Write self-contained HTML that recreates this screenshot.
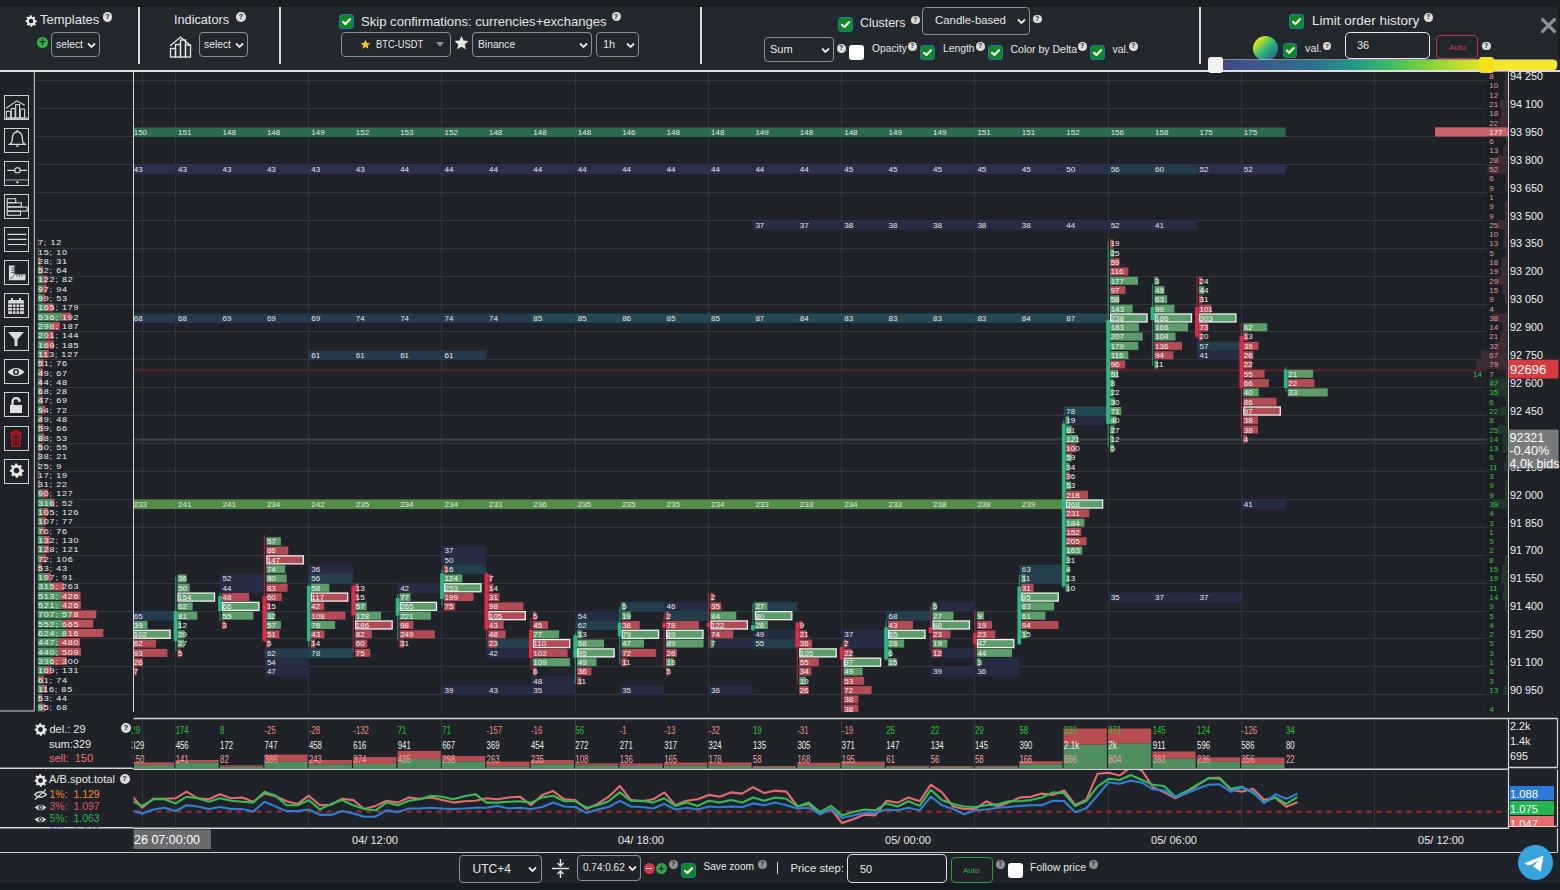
<!DOCTYPE html>
<html><head><meta charset="utf-8"><style>
html,body{margin:0;padding:0;}
body{width:1560px;height:890px;overflow:hidden;position:relative;background:#1f2329;font-family:"Liberation Sans",sans-serif;}
.t{position:absolute;white-space:pre;line-height:1.15;}
.q{position:absolute;border-radius:50%;background:#dcdcdc;color:#23272e;text-align:center;font-weight:bold;}
.cb{position:absolute;background:#0b8a1f;border:1px solid #2a6fb0;border-radius:3px;}
.cb svg{position:absolute;left:0;top:0;}
.cbw{position:absolute;background:#ffffff;border-radius:3px;}
.sel{position:absolute;border:1px solid #8b8e92;border-radius:4px;color:#e6e8ea;background:transparent;}
.inp{position:absolute;border:1px solid #ddd;border-radius:5px;color:#e6e8ea;background:transparent;box-sizing:border-box;}
.sep{position:absolute;top:7px;width:2px;height:57px;background:#dcdcdc;}
.ib{position:absolute;left:4px;width:23px;height:23px;border:1px solid #cfcfcf;}
</style></head><body>
<div style="position:absolute;left:0;top:0;width:1560px;height:7px;background:#1a1d22"></div>
<div style="position:absolute;left:0;top:7px;width:1560px;height:63px;background:#23272e"></div>
<div style="position:absolute;left:0;top:70px;width:1560px;height:2px;background:#dedede"></div>

<div style="position:absolute;left:0;top:883px;width:1560px;height:7px;background:#131a21"></div>
<svg style="position:absolute;left:0;top:0" width="1560" height="890" font-family="Liberation Sans, sans-serif">
<clipPath id="cc"><rect x="133.5" y="72" width="1375.0" height="640"/></clipPath>
<clipPath id="vp"><rect x="35" y="72" width="98.5" height="640"/></clipPath>
<line x1="35.00" y1="80.50" x2="1508.50" y2="80.50" stroke="#33373d" stroke-width="1" />
<line x1="35.00" y1="108.50" x2="1508.50" y2="108.50" stroke="#33373d" stroke-width="1" />
<line x1="35.00" y1="136.50" x2="1508.50" y2="136.50" stroke="#33373d" stroke-width="1" />
<line x1="35.00" y1="164.50" x2="1508.50" y2="164.50" stroke="#33373d" stroke-width="1" />
<line x1="35.00" y1="192.50" x2="1508.50" y2="192.50" stroke="#33373d" stroke-width="1" />
<line x1="35.00" y1="220.50" x2="1508.50" y2="220.50" stroke="#33373d" stroke-width="1" />
<line x1="35.00" y1="248.50" x2="1508.50" y2="248.50" stroke="#33373d" stroke-width="1" />
<line x1="35.00" y1="276.50" x2="1508.50" y2="276.50" stroke="#33373d" stroke-width="1" />
<line x1="35.00" y1="304.50" x2="1508.50" y2="304.50" stroke="#33373d" stroke-width="1" />
<line x1="35.00" y1="331.50" x2="1508.50" y2="331.50" stroke="#33373d" stroke-width="1" />
<line x1="35.00" y1="359.50" x2="1508.50" y2="359.50" stroke="#33373d" stroke-width="1" />
<line x1="35.00" y1="387.50" x2="1508.50" y2="387.50" stroke="#33373d" stroke-width="1" />
<line x1="35.00" y1="415.50" x2="1508.50" y2="415.50" stroke="#33373d" stroke-width="1" />
<line x1="35.00" y1="443.50" x2="1508.50" y2="443.50" stroke="#33373d" stroke-width="1" />
<line x1="35.00" y1="471.50" x2="1508.50" y2="471.50" stroke="#33373d" stroke-width="1" />
<line x1="35.00" y1="499.50" x2="1508.50" y2="499.50" stroke="#33373d" stroke-width="1" />
<line x1="35.00" y1="527.50" x2="1508.50" y2="527.50" stroke="#33373d" stroke-width="1" />
<line x1="35.00" y1="555.50" x2="1508.50" y2="555.50" stroke="#33373d" stroke-width="1" />
<line x1="35.00" y1="583.50" x2="1508.50" y2="583.50" stroke="#33373d" stroke-width="1" />
<line x1="35.00" y1="611.50" x2="1508.50" y2="611.50" stroke="#33373d" stroke-width="1" />
<line x1="35.00" y1="638.50" x2="1508.50" y2="638.50" stroke="#33373d" stroke-width="1" />
<line x1="35.00" y1="666.50" x2="1508.50" y2="666.50" stroke="#33373d" stroke-width="1" />
<line x1="35.00" y1="694.50" x2="1508.50" y2="694.50" stroke="#33373d" stroke-width="1" />
<line x1="142.50" y1="72.00" x2="142.50" y2="712.00" stroke="#33373d" stroke-width="1" />
<line x1="175.50" y1="72.00" x2="175.50" y2="712.00" stroke="#33373d" stroke-width="1" />
<line x1="308.50" y1="72.00" x2="308.50" y2="712.00" stroke="#33373d" stroke-width="1" />
<line x1="441.50" y1="72.00" x2="441.50" y2="712.00" stroke="#33373d" stroke-width="1" />
<line x1="575.50" y1="72.00" x2="575.50" y2="712.00" stroke="#33373d" stroke-width="1" />
<line x1="708.50" y1="72.00" x2="708.50" y2="712.00" stroke="#33373d" stroke-width="1" />
<line x1="841.50" y1="72.00" x2="841.50" y2="712.00" stroke="#33373d" stroke-width="1" />
<line x1="974.50" y1="72.00" x2="974.50" y2="712.00" stroke="#33373d" stroke-width="1" />
<line x1="1108.50" y1="72.00" x2="1108.50" y2="712.00" stroke="#33373d" stroke-width="1" />
<line x1="1241.50" y1="72.00" x2="1241.50" y2="712.00" stroke="#33373d" stroke-width="1" />
<line x1="1374.50" y1="72.00" x2="1374.50" y2="712.00" stroke="#33373d" stroke-width="1" />
<g clip-path="url(#cc)">
<rect x="133.50" y="127.42" width="1152.18" height="9.50" fill="#2b6a4a" />
<text x="133.70" y="134.82" font-size="8" fill="#e6e8ea" text-anchor="start" >150</text>
<text x="178.11" y="134.82" font-size="8" fill="#e6e8ea" text-anchor="start" >151</text>
<text x="222.51" y="134.82" font-size="8" fill="#e6e8ea" text-anchor="start" >148</text>
<text x="266.92" y="134.82" font-size="8" fill="#e6e8ea" text-anchor="start" >148</text>
<text x="311.33" y="134.82" font-size="8" fill="#e6e8ea" text-anchor="start" >149</text>
<text x="355.74" y="134.82" font-size="8" fill="#e6e8ea" text-anchor="start" >152</text>
<text x="400.14" y="134.82" font-size="8" fill="#e6e8ea" text-anchor="start" >153</text>
<text x="444.55" y="134.82" font-size="8" fill="#e6e8ea" text-anchor="start" >152</text>
<text x="488.96" y="134.82" font-size="8" fill="#e6e8ea" text-anchor="start" >148</text>
<text x="533.36" y="134.82" font-size="8" fill="#e6e8ea" text-anchor="start" >148</text>
<text x="577.77" y="134.82" font-size="8" fill="#e6e8ea" text-anchor="start" >148</text>
<text x="622.18" y="134.82" font-size="8" fill="#e6e8ea" text-anchor="start" >146</text>
<text x="666.58" y="134.82" font-size="8" fill="#e6e8ea" text-anchor="start" >148</text>
<text x="710.99" y="134.82" font-size="8" fill="#e6e8ea" text-anchor="start" >148</text>
<text x="755.40" y="134.82" font-size="8" fill="#e6e8ea" text-anchor="start" >149</text>
<text x="799.80" y="134.82" font-size="8" fill="#e6e8ea" text-anchor="start" >148</text>
<text x="844.21" y="134.82" font-size="8" fill="#e6e8ea" text-anchor="start" >148</text>
<text x="888.62" y="134.82" font-size="8" fill="#e6e8ea" text-anchor="start" >149</text>
<text x="933.03" y="134.82" font-size="8" fill="#e6e8ea" text-anchor="start" >149</text>
<text x="977.43" y="134.82" font-size="8" fill="#e6e8ea" text-anchor="start" >151</text>
<text x="1021.84" y="134.82" font-size="8" fill="#e6e8ea" text-anchor="start" >151</text>
<text x="1066.25" y="134.82" font-size="8" fill="#e6e8ea" text-anchor="start" >152</text>
<text x="1110.65" y="134.82" font-size="8" fill="#e6e8ea" text-anchor="start" >156</text>
<text x="1155.06" y="134.82" font-size="8" fill="#e6e8ea" text-anchor="start" >158</text>
<text x="1199.47" y="134.82" font-size="8" fill="#e6e8ea" text-anchor="start" >175</text>
<text x="1243.87" y="134.82" font-size="8" fill="#e6e8ea" text-anchor="start" >175</text>
<rect x="133.50" y="164.63" width="930.15" height="9.50" fill="#2a2f4d" />
<text x="133.70" y="172.03" font-size="8" fill="#e6e8ea" text-anchor="start" >43</text>
<text x="178.11" y="172.03" font-size="8" fill="#e6e8ea" text-anchor="start" >43</text>
<text x="222.51" y="172.03" font-size="8" fill="#e6e8ea" text-anchor="start" >43</text>
<text x="266.92" y="172.03" font-size="8" fill="#e6e8ea" text-anchor="start" >43</text>
<text x="311.33" y="172.03" font-size="8" fill="#e6e8ea" text-anchor="start" >43</text>
<text x="355.74" y="172.03" font-size="8" fill="#e6e8ea" text-anchor="start" >43</text>
<text x="400.14" y="172.03" font-size="8" fill="#e6e8ea" text-anchor="start" >44</text>
<text x="444.55" y="172.03" font-size="8" fill="#e6e8ea" text-anchor="start" >44</text>
<text x="488.96" y="172.03" font-size="8" fill="#e6e8ea" text-anchor="start" >44</text>
<text x="533.36" y="172.03" font-size="8" fill="#e6e8ea" text-anchor="start" >44</text>
<text x="577.77" y="172.03" font-size="8" fill="#e6e8ea" text-anchor="start" >44</text>
<text x="622.18" y="172.03" font-size="8" fill="#e6e8ea" text-anchor="start" >44</text>
<text x="666.58" y="172.03" font-size="8" fill="#e6e8ea" text-anchor="start" >44</text>
<text x="710.99" y="172.03" font-size="8" fill="#e6e8ea" text-anchor="start" >44</text>
<text x="755.40" y="172.03" font-size="8" fill="#e6e8ea" text-anchor="start" >44</text>
<text x="799.80" y="172.03" font-size="8" fill="#e6e8ea" text-anchor="start" >44</text>
<text x="844.21" y="172.03" font-size="8" fill="#e6e8ea" text-anchor="start" >45</text>
<text x="888.62" y="172.03" font-size="8" fill="#e6e8ea" text-anchor="start" >45</text>
<text x="933.03" y="172.03" font-size="8" fill="#e6e8ea" text-anchor="start" >45</text>
<text x="977.43" y="172.03" font-size="8" fill="#e6e8ea" text-anchor="start" >45</text>
<text x="1021.84" y="172.03" font-size="8" fill="#e6e8ea" text-anchor="start" >45</text>
<rect x="1063.65" y="164.63" width="44.41" height="9.50" fill="#2a2f4d" />
<text x="1066.25" y="172.03" font-size="8" fill="#e6e8ea" text-anchor="start" >50</text>
<rect x="1108.05" y="164.63" width="88.81" height="9.50" fill="#253d4b" />
<text x="1110.65" y="172.03" font-size="8" fill="#e6e8ea" text-anchor="start" >56</text>
<text x="1155.06" y="172.03" font-size="8" fill="#e6e8ea" text-anchor="start" >60</text>
<rect x="1196.87" y="164.63" width="88.81" height="9.50" fill="#2a2f4d" />
<text x="1199.47" y="172.03" font-size="8" fill="#e6e8ea" text-anchor="start" >52</text>
<text x="1243.87" y="172.03" font-size="8" fill="#e6e8ea" text-anchor="start" >52</text>
<rect x="752.80" y="220.45" width="444.07" height="9.50" fill="#282d44" />
<text x="755.40" y="227.85" font-size="8" fill="#e6e8ea" text-anchor="start" >37</text>
<text x="799.80" y="227.85" font-size="8" fill="#e6e8ea" text-anchor="start" >37</text>
<text x="844.21" y="227.85" font-size="8" fill="#e6e8ea" text-anchor="start" >38</text>
<text x="888.62" y="227.85" font-size="8" fill="#e6e8ea" text-anchor="start" >38</text>
<text x="933.03" y="227.85" font-size="8" fill="#e6e8ea" text-anchor="start" >38</text>
<text x="977.43" y="227.85" font-size="8" fill="#e6e8ea" text-anchor="start" >38</text>
<text x="1021.84" y="227.85" font-size="8" fill="#e6e8ea" text-anchor="start" >38</text>
<text x="1066.25" y="227.85" font-size="8" fill="#e6e8ea" text-anchor="start" >44</text>
<text x="1110.65" y="227.85" font-size="8" fill="#e6e8ea" text-anchor="start" >52</text>
<text x="1155.06" y="227.85" font-size="8" fill="#e6e8ea" text-anchor="start" >41</text>
<rect x="133.50" y="313.48" width="397.26" height="9.50" fill="#27394d" />
<text x="133.70" y="320.88" font-size="8" fill="#e6e8ea" text-anchor="start" >68</text>
<text x="178.11" y="320.88" font-size="8" fill="#e6e8ea" text-anchor="start" >68</text>
<text x="222.51" y="320.88" font-size="8" fill="#e6e8ea" text-anchor="start" >69</text>
<text x="266.92" y="320.88" font-size="8" fill="#e6e8ea" text-anchor="start" >69</text>
<text x="311.33" y="320.88" font-size="8" fill="#e6e8ea" text-anchor="start" >69</text>
<text x="355.74" y="320.88" font-size="8" fill="#e6e8ea" text-anchor="start" >74</text>
<text x="400.14" y="320.88" font-size="8" fill="#e6e8ea" text-anchor="start" >74</text>
<text x="444.55" y="320.88" font-size="8" fill="#e6e8ea" text-anchor="start" >74</text>
<text x="488.96" y="320.88" font-size="8" fill="#e6e8ea" text-anchor="start" >74</text>
<rect x="530.76" y="313.48" width="577.29" height="9.50" fill="#234a52" />
<text x="533.36" y="320.88" font-size="8" fill="#e6e8ea" text-anchor="start" >85</text>
<text x="577.77" y="320.88" font-size="8" fill="#e6e8ea" text-anchor="start" >85</text>
<text x="622.18" y="320.88" font-size="8" fill="#e6e8ea" text-anchor="start" >86</text>
<text x="666.58" y="320.88" font-size="8" fill="#e6e8ea" text-anchor="start" >85</text>
<text x="710.99" y="320.88" font-size="8" fill="#e6e8ea" text-anchor="start" >85</text>
<text x="755.40" y="320.88" font-size="8" fill="#e6e8ea" text-anchor="start" >87</text>
<text x="799.80" y="320.88" font-size="8" fill="#e6e8ea" text-anchor="start" >84</text>
<text x="844.21" y="320.88" font-size="8" fill="#e6e8ea" text-anchor="start" >83</text>
<text x="888.62" y="320.88" font-size="8" fill="#e6e8ea" text-anchor="start" >83</text>
<text x="933.03" y="320.88" font-size="8" fill="#e6e8ea" text-anchor="start" >83</text>
<text x="977.43" y="320.88" font-size="8" fill="#e6e8ea" text-anchor="start" >83</text>
<text x="1021.84" y="320.88" font-size="8" fill="#e6e8ea" text-anchor="start" >84</text>
<text x="1066.25" y="320.88" font-size="8" fill="#e6e8ea" text-anchor="start" >87</text>
<rect x="308.73" y="350.69" width="177.63" height="9.50" fill="#27394d" />
<text x="311.33" y="358.09" font-size="8" fill="#e6e8ea" text-anchor="start" >61</text>
<text x="355.74" y="358.09" font-size="8" fill="#e6e8ea" text-anchor="start" >61</text>
<text x="400.14" y="358.09" font-size="8" fill="#e6e8ea" text-anchor="start" >61</text>
<text x="444.55" y="358.09" font-size="8" fill="#e6e8ea" text-anchor="start" >61</text>
<rect x="133.50" y="499.54" width="930.15" height="9.50" fill="#528e46" />
<text x="133.70" y="506.94" font-size="8" fill="#e6e8ea" text-anchor="start" >233</text>
<text x="178.11" y="506.94" font-size="8" fill="#e6e8ea" text-anchor="start" >241</text>
<text x="222.51" y="506.94" font-size="8" fill="#e6e8ea" text-anchor="start" >241</text>
<text x="266.92" y="506.94" font-size="8" fill="#e6e8ea" text-anchor="start" >234</text>
<text x="311.33" y="506.94" font-size="8" fill="#e6e8ea" text-anchor="start" >242</text>
<text x="355.74" y="506.94" font-size="8" fill="#e6e8ea" text-anchor="start" >235</text>
<text x="400.14" y="506.94" font-size="8" fill="#e6e8ea" text-anchor="start" >234</text>
<text x="444.55" y="506.94" font-size="8" fill="#e6e8ea" text-anchor="start" >234</text>
<text x="488.96" y="506.94" font-size="8" fill="#e6e8ea" text-anchor="start" >233</text>
<text x="533.36" y="506.94" font-size="8" fill="#e6e8ea" text-anchor="start" >236</text>
<text x="577.77" y="506.94" font-size="8" fill="#e6e8ea" text-anchor="start" >235</text>
<text x="622.18" y="506.94" font-size="8" fill="#e6e8ea" text-anchor="start" >235</text>
<text x="666.58" y="506.94" font-size="8" fill="#e6e8ea" text-anchor="start" >235</text>
<text x="710.99" y="506.94" font-size="8" fill="#e6e8ea" text-anchor="start" >234</text>
<text x="755.40" y="506.94" font-size="8" fill="#e6e8ea" text-anchor="start" >233</text>
<text x="799.80" y="506.94" font-size="8" fill="#e6e8ea" text-anchor="start" >233</text>
<text x="844.21" y="506.94" font-size="8" fill="#e6e8ea" text-anchor="start" >234</text>
<text x="888.62" y="506.94" font-size="8" fill="#e6e8ea" text-anchor="start" >233</text>
<text x="933.03" y="506.94" font-size="8" fill="#e6e8ea" text-anchor="start" >238</text>
<text x="977.43" y="506.94" font-size="8" fill="#e6e8ea" text-anchor="start" >238</text>
<text x="1021.84" y="506.94" font-size="8" fill="#e6e8ea" text-anchor="start" >239</text>
<rect x="1241.27" y="499.54" width="44.41" height="9.50" fill="#272c45" />
<text x="1243.87" y="506.94" font-size="8" fill="#e6e8ea" text-anchor="start" >41</text>
<rect x="1108.05" y="592.57" width="133.22" height="9.50" fill="#272c45" />
<text x="1110.65" y="599.97" font-size="8" fill="#e6e8ea" text-anchor="start" >35</text>
<text x="1155.06" y="599.97" font-size="8" fill="#e6e8ea" text-anchor="start" >37</text>
<text x="1199.47" y="599.97" font-size="8" fill="#e6e8ea" text-anchor="start" >37</text>
<rect x="133.50" y="611.17" width="42.01" height="9.50" fill="#263a50" />
<text x="133.70" y="618.57" font-size="8" fill="#e6e8ea" text-anchor="start" >65</text>
<rect x="219.91" y="573.96" width="44.41" height="9.50" fill="#272c45" />
<text x="222.51" y="581.36" font-size="8" fill="#e6e8ea" text-anchor="start" >52</text>
<rect x="219.91" y="583.26" width="44.41" height="9.50" fill="#272c45" />
<text x="222.51" y="590.66" font-size="8" fill="#e6e8ea" text-anchor="start" >44</text>
<rect x="264.32" y="648.39" width="44.41" height="9.50" fill="#263a50" />
<text x="266.92" y="655.79" font-size="8" fill="#e6e8ea" text-anchor="start" >62</text>
<rect x="264.32" y="657.69" width="44.41" height="9.50" fill="#272c45" />
<text x="266.92" y="665.09" font-size="8" fill="#e6e8ea" text-anchor="start" >54</text>
<rect x="264.32" y="666.99" width="44.41" height="9.50" fill="#272c45" />
<text x="266.92" y="674.39" font-size="8" fill="#e6e8ea" text-anchor="start" >47</text>
<rect x="308.73" y="564.66" width="44.41" height="9.50" fill="#272c45" />
<text x="311.33" y="572.06" font-size="8" fill="#e6e8ea" text-anchor="start" >36</text>
<rect x="308.73" y="573.96" width="44.41" height="9.50" fill="#233f4b" />
<text x="311.33" y="581.36" font-size="8" fill="#e6e8ea" text-anchor="start" >56</text>
<rect x="308.73" y="648.39" width="44.41" height="9.50" fill="#234a52" />
<text x="311.33" y="655.79" font-size="8" fill="#e6e8ea" text-anchor="start" >78</text>
<rect x="397.54" y="583.26" width="44.41" height="9.50" fill="#272c45" />
<text x="400.14" y="590.66" font-size="8" fill="#e6e8ea" text-anchor="start" >42</text>
<rect x="441.95" y="546.05" width="44.41" height="9.50" fill="#272c45" />
<text x="444.55" y="553.45" font-size="8" fill="#e6e8ea" text-anchor="start" >37</text>
<rect x="441.95" y="555.36" width="44.41" height="9.50" fill="#272c45" />
<text x="444.55" y="562.76" font-size="8" fill="#e6e8ea" text-anchor="start" >50</text>
<rect x="441.95" y="564.66" width="44.41" height="9.50" fill="#233f4b" />
<rect x="441.95" y="685.60" width="133.22" height="9.50" fill="#272c45" />
<text x="444.55" y="693.00" font-size="8" fill="#e6e8ea" text-anchor="start" >39</text>
<text x="488.96" y="693.00" font-size="8" fill="#e6e8ea" text-anchor="start" >43</text>
<text x="533.36" y="693.00" font-size="8" fill="#e6e8ea" text-anchor="start" >35</text>
<rect x="486.36" y="639.08" width="44.41" height="9.50" fill="#233f4b" />
<rect x="486.36" y="648.39" width="44.41" height="9.50" fill="#272c45" />
<text x="488.96" y="655.79" font-size="8" fill="#e6e8ea" text-anchor="start" >42</text>
<rect x="530.76" y="676.30" width="44.41" height="9.50" fill="#272c45" />
<text x="533.36" y="683.70" font-size="8" fill="#e6e8ea" text-anchor="start" >48</text>
<rect x="575.17" y="611.17" width="44.41" height="9.50" fill="#272c45" />
<text x="577.77" y="618.57" font-size="8" fill="#e6e8ea" text-anchor="start" >54</text>
<rect x="575.17" y="620.48" width="44.41" height="9.50" fill="#233f4b" />
<text x="577.77" y="627.88" font-size="8" fill="#e6e8ea" text-anchor="start" >62</text>
<rect x="619.58" y="601.87" width="44.41" height="9.50" fill="#233f4b" />
<rect x="619.58" y="685.60" width="44.41" height="9.50" fill="#272c45" />
<text x="622.18" y="693.00" font-size="8" fill="#e6e8ea" text-anchor="start" >35</text>
<rect x="663.98" y="601.87" width="44.41" height="9.50" fill="#272c45" />
<text x="666.58" y="609.27" font-size="8" fill="#e6e8ea" text-anchor="start" >46</text>
<rect x="663.98" y="611.17" width="44.41" height="9.50" fill="#233f4b" />
<rect x="708.39" y="639.08" width="44.41" height="9.50" fill="#272c45" />
<rect x="708.39" y="685.60" width="44.41" height="9.50" fill="#272c45" />
<text x="710.99" y="693.00" font-size="8" fill="#e6e8ea" text-anchor="start" >36</text>
<rect x="752.80" y="601.87" width="44.41" height="9.50" fill="#233f4b" />
<rect x="752.80" y="629.78" width="44.41" height="9.50" fill="#272c45" />
<text x="755.40" y="637.18" font-size="8" fill="#e6e8ea" text-anchor="start" >49</text>
<rect x="752.80" y="639.08" width="44.41" height="9.50" fill="#233f4b" />
<text x="755.40" y="646.48" font-size="8" fill="#e6e8ea" text-anchor="start" >55</text>
<rect x="841.61" y="629.78" width="44.41" height="9.50" fill="#272c45" />
<text x="844.21" y="637.18" font-size="8" fill="#e6e8ea" text-anchor="start" >37</text>
<rect x="841.61" y="639.08" width="44.41" height="9.50" fill="#272c45" />
<rect x="886.02" y="611.17" width="44.41" height="9.50" fill="#233f4b" />
<text x="888.62" y="618.57" font-size="8" fill="#e6e8ea" text-anchor="start" >68</text>
<rect x="930.43" y="601.87" width="44.41" height="9.50" fill="#272c45" />
<rect x="930.43" y="648.39" width="44.41" height="9.50" fill="#272c45" />
<rect x="930.43" y="666.99" width="44.41" height="9.50" fill="#272c45" />
<text x="933.03" y="674.39" font-size="8" fill="#e6e8ea" text-anchor="start" >39</text>
<rect x="974.83" y="657.69" width="44.41" height="9.50" fill="#272c45" />
<rect x="974.83" y="666.99" width="44.41" height="9.50" fill="#272c45" />
<text x="977.43" y="674.39" font-size="8" fill="#e6e8ea" text-anchor="start" >36</text>
<rect x="1019.24" y="564.66" width="44.41" height="9.50" fill="#233f4b" />
<text x="1021.84" y="572.06" font-size="8" fill="#e6e8ea" text-anchor="start" >63</text>
<rect x="1019.24" y="573.96" width="44.41" height="9.50" fill="#233f4b" />
<rect x="1063.65" y="406.51" width="44.41" height="9.50" fill="#234a52" />
<text x="1066.25" y="413.91" font-size="8" fill="#e6e8ea" text-anchor="start" >78</text>
<rect x="1063.65" y="415.81" width="44.41" height="9.50" fill="#272c45" />
<rect x="1196.87" y="341.39" width="44.41" height="9.50" fill="#233f4b" />
<text x="1199.47" y="348.79" font-size="8" fill="#e6e8ea" text-anchor="start" >57</text>
<rect x="1196.87" y="350.69" width="44.41" height="9.50" fill="#272c45" />
<text x="1199.47" y="358.09" font-size="8" fill="#e6e8ea" text-anchor="start" >41</text>
<line x1="133.50" y1="370.30" x2="1508.50" y2="370.30" stroke="#4c242b" stroke-width="3" />
<line x1="133.50" y1="439.60" x2="1508.50" y2="439.60" stroke="#3c4147" stroke-width="2" />
<rect x="133.10" y="620.98" width="14.38" height="8.00" fill="#5d9d6c" />
<rect x="133.70" y="630.28" width="36.40" height="8.00" fill="#5d9d6c" stroke="#f2f2f2" stroke-width="1.3"/>
<rect x="133.10" y="639.58" width="22.85" height="8.00" fill="#b34b56" />
<rect x="133.10" y="648.89" width="34.28" height="8.00" fill="#b34b56" />
<rect x="133.10" y="658.19" width="9.58" height="8.00" fill="#b34b56" />
<rect x="133.10" y="667.49" width="3.50" height="8.00" fill="#b34b56" />
<text x="133.70" y="627.88" font-size="8" fill="#f4f4f4" text-anchor="start" >39</text>
<text x="133.70" y="637.18" font-size="8" fill="#f4f4f4" text-anchor="start" >102</text>
<text x="133.70" y="646.48" font-size="8" fill="#f4f4f4" text-anchor="start" >62</text>
<text x="133.70" y="655.79" font-size="8" fill="#f4f4f4" text-anchor="start" >93</text>
<text x="133.70" y="665.09" font-size="8" fill="#f4f4f4" text-anchor="start" >26</text>
<text x="133.70" y="674.39" font-size="8" fill="#f4f4f4" text-anchor="start" >7</text>
<rect x="177.51" y="574.46" width="8.79" height="8.00" fill="#5d9d6c" />
<rect x="177.51" y="583.76" width="12.21" height="8.00" fill="#5d9d6c" />
<rect x="178.11" y="593.07" width="36.40" height="8.00" fill="#5d9d6c" stroke="#f2f2f2" stroke-width="1.3"/>
<rect x="177.51" y="602.37" width="15.14" height="8.00" fill="#5d9d6c" />
<rect x="177.51" y="611.67" width="19.78" height="8.00" fill="#5d9d6c" />
<rect x="177.51" y="620.98" width="3.50" height="8.00" fill="#5d9d6c" />
<rect x="177.51" y="630.28" width="7.08" height="8.00" fill="#5d9d6c" />
<rect x="177.51" y="639.58" width="6.59" height="8.00" fill="#5d9d6c" />
<rect x="177.51" y="648.89" width="3.50" height="8.00" fill="#b34b56" />
<rect x="175.01" y="576.60" width="1.30" height="74.10" fill="#2fb884" opacity="0.6"/>
<rect x="173.71" y="611.00" width="3.70" height="30.00" fill="#2fb884" />
<text x="178.11" y="581.36" font-size="8" fill="#f4f4f4" text-anchor="start" >36</text>
<text x="178.11" y="590.66" font-size="8" fill="#f4f4f4" text-anchor="start" >50</text>
<text x="178.11" y="599.97" font-size="8" fill="#f4f4f4" text-anchor="start" >154</text>
<text x="178.11" y="609.27" font-size="8" fill="#f4f4f4" text-anchor="start" >62</text>
<text x="178.11" y="618.57" font-size="8" fill="#f4f4f4" text-anchor="start" >81</text>
<text x="178.11" y="627.88" font-size="8" fill="#f4f4f4" text-anchor="start" >12</text>
<text x="178.11" y="637.18" font-size="8" fill="#f4f4f4" text-anchor="start" >29</text>
<text x="178.11" y="646.48" font-size="8" fill="#f4f4f4" text-anchor="start" >27</text>
<text x="178.11" y="655.79" font-size="8" fill="#f4f4f4" text-anchor="start" >5</text>
<rect x="221.91" y="593.07" width="27.35" height="8.00" fill="#b34b56" />
<rect x="222.51" y="602.37" width="36.40" height="8.00" fill="#5d9d6c" stroke="#f2f2f2" stroke-width="1.3"/>
<rect x="221.91" y="611.67" width="31.33" height="8.00" fill="#5d9d6c" />
<rect x="221.91" y="620.98" width="3.50" height="8.00" fill="#b34b56" />
<rect x="219.41" y="592.60" width="1.30" height="28.40" fill="#2fb884" opacity="0.6"/>
<rect x="218.11" y="596.00" width="3.70" height="15.00" fill="#2fb884" />
<text x="222.51" y="599.97" font-size="8" fill="#f4f4f4" text-anchor="start" >48</text>
<text x="222.51" y="609.27" font-size="8" fill="#f4f4f4" text-anchor="start" >66</text>
<text x="222.51" y="618.57" font-size="8" fill="#f4f4f4" text-anchor="start" >55</text>
<text x="222.51" y="627.88" font-size="8" fill="#f4f4f4" text-anchor="start" >3</text>
<rect x="266.32" y="537.25" width="14.58" height="8.00" fill="#5d9d6c" />
<rect x="266.32" y="546.55" width="22.00" height="8.00" fill="#b34b56" />
<rect x="266.92" y="555.86" width="36.40" height="8.00" fill="#b34b56" stroke="#f2f2f2" stroke-width="1.3"/>
<rect x="266.32" y="565.16" width="18.93" height="8.00" fill="#5d9d6c" />
<rect x="266.32" y="574.46" width="20.46" height="8.00" fill="#5d9d6c" />
<rect x="266.32" y="583.76" width="21.23" height="8.00" fill="#b34b56" />
<rect x="266.32" y="593.07" width="15.35" height="8.00" fill="#b34b56" />
<rect x="266.32" y="602.37" width="3.84" height="8.00" fill="#b34b56" />
<rect x="266.32" y="611.67" width="8.19" height="8.00" fill="#5d9d6c" />
<rect x="266.32" y="620.98" width="14.58" height="8.00" fill="#5d9d6c" />
<rect x="266.32" y="630.28" width="13.04" height="8.00" fill="#b34b56" />
<rect x="266.32" y="639.58" width="3.50" height="8.00" fill="#b34b56" />
<rect x="263.82" y="535.00" width="1.30" height="107.00" fill="#e02a49" opacity="0.6"/>
<rect x="262.52" y="596.00" width="3.70" height="45.00" fill="#e02a49" />
<text x="266.92" y="544.15" font-size="8" fill="#f4f4f4" text-anchor="start" >57</text>
<text x="266.92" y="553.45" font-size="8" fill="#f4f4f4" text-anchor="start" >86</text>
<text x="266.92" y="562.76" font-size="8" fill="#f4f4f4" text-anchor="start" >147</text>
<text x="266.92" y="572.06" font-size="8" fill="#f4f4f4" text-anchor="start" >74</text>
<text x="266.92" y="581.36" font-size="8" fill="#f4f4f4" text-anchor="start" >80</text>
<text x="266.92" y="590.66" font-size="8" fill="#f4f4f4" text-anchor="start" >83</text>
<text x="266.92" y="599.97" font-size="8" fill="#f4f4f4" text-anchor="start" >60</text>
<text x="266.92" y="609.27" font-size="8" fill="#f4f4f4" text-anchor="start" >15</text>
<text x="266.92" y="618.57" font-size="8" fill="#f4f4f4" text-anchor="start" >32</text>
<text x="266.92" y="627.88" font-size="8" fill="#f4f4f4" text-anchor="start" >57</text>
<text x="266.92" y="637.18" font-size="8" fill="#f4f4f4" text-anchor="start" >51</text>
<text x="266.92" y="646.48" font-size="8" fill="#f4f4f4" text-anchor="start" >5</text>
<rect x="310.73" y="583.76" width="18.64" height="8.00" fill="#5d9d6c" />
<rect x="311.33" y="593.07" width="36.40" height="8.00" fill="#b34b56" stroke="#f2f2f2" stroke-width="1.3"/>
<rect x="310.73" y="602.37" width="13.50" height="8.00" fill="#b34b56" />
<rect x="310.73" y="611.67" width="34.71" height="8.00" fill="#b34b56" />
<rect x="310.73" y="620.98" width="24.42" height="8.00" fill="#5d9d6c" />
<rect x="310.73" y="630.28" width="13.82" height="8.00" fill="#b34b56" />
<rect x="310.73" y="639.58" width="4.50" height="8.00" fill="#b34b56" />
<rect x="308.23" y="584.00" width="1.30" height="63.00" fill="#2fb884" opacity="0.6"/>
<rect x="306.93" y="586.00" width="3.70" height="55.00" fill="#2fb884" />
<text x="311.33" y="590.66" font-size="8" fill="#f4f4f4" text-anchor="start" >58</text>
<text x="311.33" y="599.97" font-size="8" fill="#f4f4f4" text-anchor="start" >117</text>
<text x="311.33" y="609.27" font-size="8" fill="#f4f4f4" text-anchor="start" >42</text>
<text x="311.33" y="618.57" font-size="8" fill="#f4f4f4" text-anchor="start" >108</text>
<text x="311.33" y="627.88" font-size="8" fill="#f4f4f4" text-anchor="start" >76</text>
<text x="311.33" y="637.18" font-size="8" fill="#f4f4f4" text-anchor="start" >43</text>
<text x="311.33" y="646.48" font-size="8" fill="#f4f4f4" text-anchor="start" >14</text>
<rect x="355.13" y="583.76" width="3.50" height="8.00" fill="#b34b56" />
<rect x="355.13" y="593.07" width="3.50" height="8.00" fill="#b34b56" />
<rect x="355.13" y="602.37" width="11.52" height="8.00" fill="#5d9d6c" />
<rect x="355.13" y="611.67" width="25.88" height="8.00" fill="#5d9d6c" />
<rect x="355.74" y="620.98" width="36.40" height="8.00" fill="#b34b56" stroke="#f2f2f2" stroke-width="1.3"/>
<rect x="355.13" y="630.28" width="16.58" height="8.00" fill="#b34b56" />
<rect x="355.13" y="639.58" width="12.13" height="8.00" fill="#b34b56" />
<rect x="355.13" y="648.89" width="15.16" height="8.00" fill="#b34b56" />
<rect x="352.63" y="584.00" width="1.30" height="69.00" fill="#e02a49" opacity="0.6"/>
<rect x="351.33" y="586.00" width="3.70" height="29.60" fill="#e02a49" />
<text x="355.74" y="590.66" font-size="8" fill="#f4f4f4" text-anchor="start" >13</text>
<text x="355.74" y="599.97" font-size="8" fill="#f4f4f4" text-anchor="start" >15</text>
<text x="355.74" y="609.27" font-size="8" fill="#f4f4f4" text-anchor="start" >57</text>
<text x="355.74" y="618.57" font-size="8" fill="#f4f4f4" text-anchor="start" >128</text>
<text x="355.74" y="627.88" font-size="8" fill="#f4f4f4" text-anchor="start" >186</text>
<text x="355.74" y="637.18" font-size="8" fill="#f4f4f4" text-anchor="start" >82</text>
<text x="355.74" y="646.48" font-size="8" fill="#f4f4f4" text-anchor="start" >60</text>
<text x="355.74" y="655.79" font-size="8" fill="#f4f4f4" text-anchor="start" >75</text>
<rect x="399.54" y="593.07" width="10.93" height="8.00" fill="#5d9d6c" />
<rect x="400.14" y="602.37" width="36.40" height="8.00" fill="#5d9d6c" stroke="#f2f2f2" stroke-width="1.3"/>
<rect x="399.54" y="611.67" width="31.36" height="8.00" fill="#5d9d6c" />
<rect x="399.54" y="620.98" width="13.90" height="8.00" fill="#b34b56" />
<rect x="399.54" y="630.28" width="35.33" height="8.00" fill="#b34b56" />
<rect x="399.54" y="639.58" width="4.40" height="8.00" fill="#b34b56" />
<rect x="397.04" y="594.00" width="1.30" height="47.00" fill="#2fb884" opacity="0.6"/>
<rect x="395.74" y="598.00" width="3.70" height="17.60" fill="#2fb884" />
<text x="400.14" y="599.97" font-size="8" fill="#f4f4f4" text-anchor="start" >77</text>
<text x="400.14" y="609.27" font-size="8" fill="#f4f4f4" text-anchor="start" >265</text>
<text x="400.14" y="618.57" font-size="8" fill="#f4f4f4" text-anchor="start" >221</text>
<text x="400.14" y="627.88" font-size="8" fill="#f4f4f4" text-anchor="start" >98</text>
<text x="400.14" y="637.18" font-size="8" fill="#f4f4f4" text-anchor="start" >249</text>
<text x="400.14" y="646.48" font-size="8" fill="#f4f4f4" text-anchor="start" >31</text>
<rect x="443.95" y="565.16" width="3.50" height="8.00" fill="#b34b56" />
<rect x="443.95" y="574.46" width="18.43" height="8.00" fill="#5d9d6c" />
<rect x="444.55" y="583.76" width="36.40" height="8.00" fill="#5d9d6c" stroke="#f2f2f2" stroke-width="1.3"/>
<rect x="443.95" y="593.07" width="29.57" height="8.00" fill="#b34b56" />
<rect x="443.95" y="602.37" width="11.15" height="8.00" fill="#b34b56" />
<rect x="441.45" y="569.70" width="1.30" height="37.00" fill="#2fb884" opacity="0.6"/>
<rect x="440.15" y="573.60" width="3.70" height="25.20" fill="#2fb884" />
<text x="444.55" y="572.06" font-size="8" fill="#f4f4f4" text-anchor="start" >16</text>
<text x="444.55" y="581.36" font-size="8" fill="#f4f4f4" text-anchor="start" >124</text>
<text x="444.55" y="590.66" font-size="8" fill="#f4f4f4" text-anchor="start" >253</text>
<text x="444.55" y="599.97" font-size="8" fill="#f4f4f4" text-anchor="start" >199</text>
<text x="444.55" y="609.27" font-size="8" fill="#f4f4f4" text-anchor="start" >75</text>
<rect x="488.36" y="574.46" width="3.50" height="8.00" fill="#b34b56" />
<rect x="488.36" y="583.76" width="5.01" height="8.00" fill="#b34b56" />
<rect x="488.36" y="593.07" width="11.10" height="8.00" fill="#b34b56" />
<rect x="488.36" y="602.37" width="35.09" height="8.00" fill="#b34b56" />
<rect x="488.96" y="611.67" width="36.40" height="8.00" fill="#b34b56" stroke="#f2f2f2" stroke-width="1.3"/>
<rect x="488.36" y="620.98" width="15.40" height="8.00" fill="#b34b56" />
<rect x="488.36" y="630.28" width="17.19" height="8.00" fill="#b34b56" />
<rect x="488.36" y="639.58" width="8.24" height="8.00" fill="#b34b56" />
<rect x="485.86" y="571.60" width="1.30" height="69.20" fill="#e02a49" opacity="0.6"/>
<rect x="484.56" y="573.60" width="3.70" height="56.10" fill="#e02a49" />
<text x="488.96" y="581.36" font-size="8" fill="#f4f4f4" text-anchor="start" >7</text>
<text x="488.96" y="590.66" font-size="8" fill="#f4f4f4" text-anchor="start" >14</text>
<text x="488.96" y="599.97" font-size="8" fill="#f4f4f4" text-anchor="start" >31</text>
<text x="488.96" y="609.27" font-size="8" fill="#f4f4f4" text-anchor="start" >98</text>
<text x="488.96" y="618.57" font-size="8" fill="#f4f4f4" text-anchor="start" >105</text>
<text x="488.96" y="627.88" font-size="8" fill="#f4f4f4" text-anchor="start" >43</text>
<text x="488.96" y="637.18" font-size="8" fill="#f4f4f4" text-anchor="start" >48</text>
<text x="488.96" y="646.48" font-size="8" fill="#f4f4f4" text-anchor="start" >23</text>
<rect x="532.76" y="611.67" width="3.50" height="8.00" fill="#b34b56" />
<rect x="532.76" y="620.98" width="15.38" height="8.00" fill="#b34b56" />
<rect x="532.76" y="630.28" width="26.32" height="8.00" fill="#5d9d6c" />
<rect x="533.36" y="639.58" width="36.40" height="8.00" fill="#b34b56" stroke="#f2f2f2" stroke-width="1.3"/>
<rect x="532.76" y="648.89" width="34.87" height="8.00" fill="#b34b56" />
<rect x="532.76" y="658.19" width="37.26" height="8.00" fill="#5d9d6c" />
<rect x="532.76" y="667.49" width="3.50" height="8.00" fill="#b34b56" />
<rect x="530.26" y="618.00" width="1.30" height="52.00" fill="#e02a49" opacity="0.6"/>
<rect x="528.96" y="629.70" width="3.70" height="28.30" fill="#e02a49" />
<text x="533.36" y="618.57" font-size="8" fill="#f4f4f4" text-anchor="start" >5</text>
<text x="533.36" y="627.88" font-size="8" fill="#f4f4f4" text-anchor="start" >45</text>
<text x="533.36" y="637.18" font-size="8" fill="#f4f4f4" text-anchor="start" >77</text>
<text x="533.36" y="646.48" font-size="8" fill="#f4f4f4" text-anchor="start" >110</text>
<text x="533.36" y="655.79" font-size="8" fill="#f4f4f4" text-anchor="start" >102</text>
<text x="533.36" y="665.09" font-size="8" fill="#f4f4f4" text-anchor="start" >109</text>
<text x="533.36" y="674.39" font-size="8" fill="#f4f4f4" text-anchor="start" >6</text>
<rect x="577.17" y="630.28" width="5.15" height="8.00" fill="#5d9d6c" />
<rect x="577.17" y="639.58" width="26.91" height="8.00" fill="#5d9d6c" />
<rect x="577.77" y="648.89" width="36.40" height="8.00" fill="#5d9d6c" stroke="#f2f2f2" stroke-width="1.3"/>
<rect x="577.17" y="658.19" width="19.39" height="8.00" fill="#5d9d6c" />
<rect x="577.17" y="667.49" width="14.25" height="8.00" fill="#b34b56" />
<rect x="577.17" y="676.80" width="4.35" height="8.00" fill="#b34b56" />
<rect x="574.67" y="633.00" width="1.30" height="51.00" fill="#2fb884" opacity="0.6"/>
<rect x="573.37" y="635.40" width="3.70" height="22.20" fill="#2fb884" />
<text x="577.77" y="637.18" font-size="8" fill="#f4f4f4" text-anchor="start" >13</text>
<text x="577.77" y="646.48" font-size="8" fill="#f4f4f4" text-anchor="start" >68</text>
<text x="577.77" y="655.79" font-size="8" fill="#f4f4f4" text-anchor="start" >95</text>
<text x="577.77" y="665.09" font-size="8" fill="#f4f4f4" text-anchor="start" >49</text>
<text x="577.77" y="674.39" font-size="8" fill="#f4f4f4" text-anchor="start" >36</text>
<text x="577.77" y="683.70" font-size="8" fill="#f4f4f4" text-anchor="start" >11</text>
<rect x="621.58" y="602.37" width="3.50" height="8.00" fill="#5d9d6c" />
<rect x="621.58" y="611.67" width="9.04" height="8.00" fill="#5d9d6c" />
<rect x="621.58" y="620.98" width="18.09" height="8.00" fill="#b34b56" />
<rect x="622.18" y="630.28" width="36.40" height="8.00" fill="#5d9d6c" stroke="#f2f2f2" stroke-width="1.3"/>
<rect x="621.58" y="639.58" width="22.37" height="8.00" fill="#5d9d6c" />
<rect x="621.58" y="648.89" width="34.27" height="8.00" fill="#b34b56" />
<rect x="621.58" y="658.19" width="5.24" height="8.00" fill="#b34b56" />
<rect x="619.08" y="606.70" width="1.30" height="57.60" fill="#2fb884" opacity="0.6"/>
<rect x="617.78" y="622.80" width="3.70" height="13.60" fill="#2fb884" />
<text x="622.18" y="609.27" font-size="8" fill="#f4f4f4" text-anchor="start" >5</text>
<text x="622.18" y="618.57" font-size="8" fill="#f4f4f4" text-anchor="start" >19</text>
<text x="622.18" y="627.88" font-size="8" fill="#f4f4f4" text-anchor="start" >38</text>
<text x="622.18" y="637.18" font-size="8" fill="#f4f4f4" text-anchor="start" >79</text>
<text x="622.18" y="646.48" font-size="8" fill="#f4f4f4" text-anchor="start" >47</text>
<text x="622.18" y="655.79" font-size="8" fill="#f4f4f4" text-anchor="start" >72</text>
<text x="622.18" y="665.09" font-size="8" fill="#f4f4f4" text-anchor="start" >11</text>
<rect x="665.98" y="611.67" width="3.50" height="8.00" fill="#b34b56" />
<rect x="665.98" y="620.98" width="32.95" height="8.00" fill="#b34b56" />
<rect x="666.58" y="630.28" width="36.40" height="8.00" fill="#5d9d6c" stroke="#f2f2f2" stroke-width="1.3"/>
<rect x="665.98" y="639.58" width="37.60" height="8.00" fill="#5d9d6c" />
<rect x="665.98" y="648.89" width="10.98" height="8.00" fill="#b34b56" />
<rect x="665.98" y="658.19" width="7.60" height="8.00" fill="#5d9d6c" />
<rect x="665.98" y="667.49" width="3.50" height="8.00" fill="#b34b56" />
<rect x="663.48" y="613.70" width="1.30" height="54.30" fill="#e02a49" opacity="0.6"/>
<rect x="662.18" y="622.80" width="3.70" height="4.90" fill="#e02a49" />
<text x="666.58" y="618.57" font-size="8" fill="#f4f4f4" text-anchor="start" >2</text>
<text x="666.58" y="627.88" font-size="8" fill="#f4f4f4" text-anchor="start" >78</text>
<text x="666.58" y="637.18" font-size="8" fill="#f4f4f4" text-anchor="start" >89</text>
<text x="666.58" y="646.48" font-size="8" fill="#f4f4f4" text-anchor="start" >89</text>
<text x="666.58" y="655.79" font-size="8" fill="#f4f4f4" text-anchor="start" >26</text>
<text x="666.58" y="665.09" font-size="8" fill="#f4f4f4" text-anchor="start" >18</text>
<text x="666.58" y="674.39" font-size="8" fill="#f4f4f4" text-anchor="start" >5</text>
<rect x="710.39" y="593.07" width="3.50" height="8.00" fill="#b34b56" />
<rect x="710.39" y="602.37" width="10.79" height="8.00" fill="#b34b56" />
<rect x="710.39" y="611.67" width="25.89" height="8.00" fill="#5d9d6c" />
<rect x="710.99" y="620.98" width="36.40" height="8.00" fill="#b34b56" stroke="#f2f2f2" stroke-width="1.3"/>
<rect x="710.39" y="630.28" width="22.81" height="8.00" fill="#b34b56" />
<rect x="710.39" y="639.58" width="3.50" height="8.00" fill="#5d9d6c" />
<rect x="707.89" y="592.70" width="1.30" height="55.30" fill="#e02a49" opacity="0.6"/>
<rect x="706.59" y="622.80" width="3.70" height="4.50" fill="#e02a49" />
<text x="710.99" y="599.97" font-size="8" fill="#f4f4f4" text-anchor="start" >2</text>
<text x="710.99" y="609.27" font-size="8" fill="#f4f4f4" text-anchor="start" >35</text>
<text x="710.99" y="618.57" font-size="8" fill="#f4f4f4" text-anchor="start" >84</text>
<text x="710.99" y="627.88" font-size="8" fill="#f4f4f4" text-anchor="start" >122</text>
<text x="710.99" y="637.18" font-size="8" fill="#f4f4f4" text-anchor="start" >74</text>
<text x="710.99" y="646.48" font-size="8" fill="#f4f4f4" text-anchor="start" >7</text>
<rect x="754.80" y="602.37" width="12.69" height="8.00" fill="#5d9d6c" />
<rect x="755.40" y="611.67" width="36.40" height="8.00" fill="#5d9d6c" stroke="#f2f2f2" stroke-width="1.3"/>
<rect x="754.80" y="620.98" width="13.16" height="8.00" fill="#5d9d6c" />
<rect x="752.30" y="604.00" width="1.30" height="27.00" fill="#2fb884" opacity="0.6"/>
<rect x="751.00" y="625.30" width="3.70" height="4.90" fill="#2fb884" />
<text x="755.40" y="609.27" font-size="8" fill="#f4f4f4" text-anchor="start" >27</text>
<text x="755.40" y="618.57" font-size="8" fill="#f4f4f4" text-anchor="start" >80</text>
<text x="755.40" y="627.88" font-size="8" fill="#f4f4f4" text-anchor="start" >28</text>
<rect x="799.20" y="620.98" width="3.50" height="8.00" fill="#b34b56" />
<rect x="799.20" y="630.28" width="7.52" height="8.00" fill="#b34b56" />
<rect x="799.20" y="639.58" width="12.89" height="8.00" fill="#b34b56" />
<rect x="799.80" y="648.89" width="36.40" height="8.00" fill="#5d9d6c" stroke="#f2f2f2" stroke-width="1.3"/>
<rect x="799.20" y="658.19" width="19.70" height="8.00" fill="#b34b56" />
<rect x="799.20" y="667.49" width="12.18" height="8.00" fill="#b34b56" />
<rect x="799.20" y="676.80" width="6.80" height="8.00" fill="#5d9d6c" />
<rect x="799.20" y="686.10" width="9.31" height="8.00" fill="#b34b56" />
<rect x="796.70" y="621.00" width="1.30" height="64.00" fill="#e02a49" opacity="0.6"/>
<rect x="795.40" y="622.80" width="3.70" height="24.20" fill="#e02a49" />
<text x="799.80" y="627.88" font-size="8" fill="#f4f4f4" text-anchor="start" >9</text>
<text x="799.80" y="637.18" font-size="8" fill="#f4f4f4" text-anchor="start" >21</text>
<text x="799.80" y="646.48" font-size="8" fill="#f4f4f4" text-anchor="start" >36</text>
<text x="799.80" y="655.79" font-size="8" fill="#f4f4f4" text-anchor="start" >105</text>
<text x="799.80" y="665.09" font-size="8" fill="#f4f4f4" text-anchor="start" >55</text>
<text x="799.80" y="674.39" font-size="8" fill="#f4f4f4" text-anchor="start" >34</text>
<text x="799.80" y="683.70" font-size="8" fill="#f4f4f4" text-anchor="start" >19</text>
<text x="799.80" y="693.00" font-size="8" fill="#f4f4f4" text-anchor="start" >26</text>
<rect x="843.61" y="639.58" width="3.50" height="8.00" fill="#b34b56" />
<rect x="843.61" y="648.89" width="8.53" height="8.00" fill="#b34b56" />
<rect x="844.21" y="658.19" width="36.40" height="8.00" fill="#5d9d6c" stroke="#f2f2f2" stroke-width="1.3"/>
<rect x="843.61" y="667.49" width="18.99" height="8.00" fill="#5d9d6c" />
<rect x="843.61" y="676.80" width="20.54" height="8.00" fill="#b34b56" />
<rect x="843.61" y="686.10" width="27.91" height="8.00" fill="#b34b56" />
<rect x="843.61" y="695.40" width="14.73" height="8.00" fill="#b34b56" />
<rect x="843.61" y="704.70" width="14.73" height="8.00" fill="#b34b56" />
<rect x="841.11" y="644.60" width="1.30" height="66.40" fill="#e02a49" opacity="0.6"/>
<rect x="839.81" y="647.00" width="3.70" height="12.40" fill="#e02a49" />
<text x="844.21" y="646.48" font-size="8" fill="#f4f4f4" text-anchor="start" >2</text>
<text x="844.21" y="655.79" font-size="8" fill="#f4f4f4" text-anchor="start" >22</text>
<text x="844.21" y="665.09" font-size="8" fill="#f4f4f4" text-anchor="start" >97</text>
<text x="844.21" y="674.39" font-size="8" fill="#f4f4f4" text-anchor="start" >49</text>
<text x="844.21" y="683.70" font-size="8" fill="#f4f4f4" text-anchor="start" >53</text>
<text x="844.21" y="693.00" font-size="8" fill="#f4f4f4" text-anchor="start" >72</text>
<text x="844.21" y="702.30" font-size="8" fill="#f4f4f4" text-anchor="start" >38</text>
<text x="844.21" y="711.60" font-size="8" fill="#f4f4f4" text-anchor="start" >38</text>
<rect x="888.02" y="620.98" width="24.87" height="8.00" fill="#b34b56" />
<rect x="888.62" y="630.28" width="36.40" height="8.00" fill="#5d9d6c" stroke="#f2f2f2" stroke-width="1.3"/>
<rect x="888.02" y="639.58" width="16.20" height="8.00" fill="#5d9d6c" />
<rect x="888.02" y="648.89" width="3.50" height="8.00" fill="#5d9d6c" />
<rect x="888.02" y="658.19" width="8.68" height="8.00" fill="#5d9d6c" />
<rect x="885.52" y="620.00" width="1.30" height="41.00" fill="#2fb884" opacity="0.6"/>
<rect x="884.22" y="627.30" width="3.70" height="32.10" fill="#2fb884" />
<text x="888.62" y="627.88" font-size="8" fill="#f4f4f4" text-anchor="start" >43</text>
<text x="888.62" y="637.18" font-size="8" fill="#f4f4f4" text-anchor="start" >65</text>
<text x="888.62" y="646.48" font-size="8" fill="#f4f4f4" text-anchor="start" >28</text>
<text x="888.62" y="655.79" font-size="8" fill="#f4f4f4" text-anchor="start" >6</text>
<text x="888.62" y="665.09" font-size="8" fill="#f4f4f4" text-anchor="start" >15</text>
<rect x="932.43" y="602.37" width="3.92" height="8.00" fill="#5d9d6c" />
<rect x="932.43" y="611.67" width="21.15" height="8.00" fill="#5d9d6c" />
<rect x="933.03" y="620.98" width="36.40" height="8.00" fill="#5d9d6c" stroke="#f2f2f2" stroke-width="1.3"/>
<rect x="932.43" y="630.28" width="18.02" height="8.00" fill="#b34b56" />
<rect x="932.43" y="639.58" width="14.88" height="8.00" fill="#5d9d6c" />
<rect x="932.43" y="648.89" width="9.40" height="8.00" fill="#b34b56" />
<rect x="929.93" y="607.00" width="1.30" height="43.50" fill="#e02a49" opacity="0.6"/>
<rect x="928.63" y="627.00" width="3.70" height="6.00" fill="#e02a49" />
<text x="933.03" y="609.27" font-size="8" fill="#f4f4f4" text-anchor="start" >5</text>
<text x="933.03" y="618.57" font-size="8" fill="#f4f4f4" text-anchor="start" >27</text>
<text x="933.03" y="627.88" font-size="8" fill="#f4f4f4" text-anchor="start" >48</text>
<text x="933.03" y="637.18" font-size="8" fill="#f4f4f4" text-anchor="start" >23</text>
<text x="933.03" y="646.48" font-size="8" fill="#f4f4f4" text-anchor="start" >19</text>
<text x="933.03" y="655.79" font-size="8" fill="#f4f4f4" text-anchor="start" >12</text>
<rect x="976.83" y="611.67" width="7.20" height="8.00" fill="#5d9d6c" />
<rect x="976.83" y="620.98" width="15.20" height="8.00" fill="#b34b56" />
<rect x="976.83" y="630.28" width="18.40" height="8.00" fill="#b34b56" />
<rect x="977.43" y="639.58" width="36.40" height="8.00" fill="#5d9d6c" stroke="#f2f2f2" stroke-width="1.3"/>
<rect x="976.83" y="648.89" width="35.20" height="8.00" fill="#5d9d6c" />
<rect x="976.83" y="658.19" width="3.50" height="8.00" fill="#5d9d6c" />
<rect x="974.33" y="609.70" width="1.30" height="48.30" fill="#e02a49" opacity="0.6"/>
<rect x="973.03" y="633.00" width="3.70" height="11.30" fill="#e02a49" />
<text x="977.43" y="618.57" font-size="8" fill="#f4f4f4" text-anchor="start" >9</text>
<text x="977.43" y="627.88" font-size="8" fill="#f4f4f4" text-anchor="start" >19</text>
<text x="977.43" y="637.18" font-size="8" fill="#f4f4f4" text-anchor="start" >23</text>
<text x="977.43" y="646.48" font-size="8" fill="#f4f4f4" text-anchor="start" >47</text>
<text x="977.43" y="655.79" font-size="8" fill="#f4f4f4" text-anchor="start" >44</text>
<text x="977.43" y="665.09" font-size="8" fill="#f4f4f4" text-anchor="start" >3</text>
<rect x="1021.24" y="574.46" width="4.35" height="8.00" fill="#5d9d6c" />
<rect x="1021.24" y="583.76" width="12.27" height="8.00" fill="#b34b56" />
<rect x="1021.84" y="593.07" width="36.40" height="8.00" fill="#5d9d6c" stroke="#f2f2f2" stroke-width="1.3"/>
<rect x="1021.24" y="602.37" width="32.85" height="8.00" fill="#5d9d6c" />
<rect x="1021.24" y="611.67" width="24.14" height="8.00" fill="#5d9d6c" />
<rect x="1021.24" y="620.98" width="37.20" height="8.00" fill="#b34b56" />
<rect x="1021.24" y="630.28" width="5.94" height="8.00" fill="#5d9d6c" />
<rect x="1018.74" y="575.00" width="1.30" height="70.00" fill="#2fb884" opacity="0.6"/>
<rect x="1017.44" y="586.70" width="3.70" height="57.60" fill="#2fb884" />
<text x="1021.84" y="581.36" font-size="8" fill="#f4f4f4" text-anchor="start" >11</text>
<text x="1021.84" y="590.66" font-size="8" fill="#f4f4f4" text-anchor="start" >31</text>
<text x="1021.84" y="599.97" font-size="8" fill="#f4f4f4" text-anchor="start" >95</text>
<text x="1021.84" y="609.27" font-size="8" fill="#f4f4f4" text-anchor="start" >83</text>
<text x="1021.84" y="618.57" font-size="8" fill="#f4f4f4" text-anchor="start" >61</text>
<text x="1021.84" y="627.88" font-size="8" fill="#f4f4f4" text-anchor="start" >94</text>
<text x="1021.84" y="637.18" font-size="8" fill="#f4f4f4" text-anchor="start" >15</text>
<rect x="1065.65" y="416.31" width="3.50" height="8.00" fill="#5d9d6c" />
<rect x="1065.65" y="425.61" width="6.23" height="8.00" fill="#5d9d6c" />
<rect x="1065.65" y="434.92" width="12.36" height="8.00" fill="#5d9d6c" />
<rect x="1065.65" y="444.22" width="10.22" height="8.00" fill="#b34b56" />
<rect x="1065.65" y="453.52" width="6.03" height="8.00" fill="#5d9d6c" />
<rect x="1065.65" y="462.83" width="3.50" height="8.00" fill="#5d9d6c" />
<rect x="1065.65" y="472.13" width="3.68" height="8.00" fill="#b34b56" />
<rect x="1065.65" y="481.43" width="5.42" height="8.00" fill="#5d9d6c" />
<rect x="1065.65" y="490.74" width="22.27" height="8.00" fill="#b34b56" />
<rect x="1066.25" y="500.04" width="36.40" height="8.00" fill="#5d9d6c" stroke="#f2f2f2" stroke-width="1.3"/>
<rect x="1065.65" y="509.34" width="23.60" height="8.00" fill="#b34b56" />
<rect x="1065.65" y="518.64" width="18.80" height="8.00" fill="#5d9d6c" />
<rect x="1065.65" y="527.95" width="15.53" height="8.00" fill="#b34b56" />
<rect x="1065.65" y="537.25" width="20.95" height="8.00" fill="#b34b56" />
<rect x="1065.65" y="546.55" width="16.65" height="8.00" fill="#5d9d6c" />
<rect x="1065.65" y="555.86" width="3.50" height="8.00" fill="#5d9d6c" />
<rect x="1065.65" y="565.16" width="3.50" height="8.00" fill="#5d9d6c" />
<rect x="1065.65" y="574.46" width="3.50" height="8.00" fill="#5d9d6c" />
<rect x="1065.65" y="583.76" width="3.50" height="8.00" fill="#5d9d6c" />
<rect x="1063.15" y="420.00" width="1.30" height="168.70" fill="#2fb884" opacity="0.6"/>
<rect x="1061.85" y="423.60" width="3.70" height="162.70" fill="#2fb884" />
<text x="1066.25" y="423.21" font-size="8" fill="#f4f4f4" text-anchor="start" >19</text>
<text x="1066.25" y="432.51" font-size="8" fill="#f4f4f4" text-anchor="start" >61</text>
<text x="1066.25" y="441.82" font-size="8" fill="#f4f4f4" text-anchor="start" >121</text>
<text x="1066.25" y="451.12" font-size="8" fill="#f4f4f4" text-anchor="start" >100</text>
<text x="1066.25" y="460.42" font-size="8" fill="#f4f4f4" text-anchor="start" >59</text>
<text x="1066.25" y="469.73" font-size="8" fill="#f4f4f4" text-anchor="start" >34</text>
<text x="1066.25" y="479.03" font-size="8" fill="#f4f4f4" text-anchor="start" >36</text>
<text x="1066.25" y="488.33" font-size="8" fill="#f4f4f4" text-anchor="start" >53</text>
<text x="1066.25" y="497.63" font-size="8" fill="#f4f4f4" text-anchor="start" >218</text>
<text x="1066.25" y="506.94" font-size="8" fill="#f4f4f4" text-anchor="start" >368</text>
<text x="1066.25" y="516.24" font-size="8" fill="#f4f4f4" text-anchor="start" >231</text>
<text x="1066.25" y="525.54" font-size="8" fill="#f4f4f4" text-anchor="start" >184</text>
<text x="1066.25" y="534.85" font-size="8" fill="#f4f4f4" text-anchor="start" >152</text>
<text x="1066.25" y="544.15" font-size="8" fill="#f4f4f4" text-anchor="start" >205</text>
<text x="1066.25" y="553.45" font-size="8" fill="#f4f4f4" text-anchor="start" >163</text>
<text x="1066.25" y="562.76" font-size="8" fill="#f4f4f4" text-anchor="start" >31</text>
<text x="1066.25" y="572.06" font-size="8" fill="#f4f4f4" text-anchor="start" >4</text>
<text x="1066.25" y="581.36" font-size="8" fill="#f4f4f4" text-anchor="start" >13</text>
<text x="1066.25" y="590.66" font-size="8" fill="#f4f4f4" text-anchor="start" >10</text>
<rect x="1110.05" y="239.55" width="3.50" height="8.00" fill="#b34b56" />
<rect x="1110.05" y="248.86" width="3.95" height="8.00" fill="#5d9d6c" />
<rect x="1110.05" y="258.16" width="9.32" height="8.00" fill="#b34b56" />
<rect x="1110.05" y="267.46" width="18.33" height="8.00" fill="#b34b56" />
<rect x="1110.05" y="276.77" width="27.96" height="8.00" fill="#5d9d6c" />
<rect x="1110.05" y="286.07" width="15.32" height="8.00" fill="#b34b56" />
<rect x="1110.05" y="295.37" width="9.16" height="8.00" fill="#5d9d6c" />
<rect x="1110.05" y="304.68" width="22.59" height="8.00" fill="#5d9d6c" />
<rect x="1110.65" y="313.98" width="36.40" height="8.00" fill="#5d9d6c" stroke="#f2f2f2" stroke-width="1.3"/>
<rect x="1110.05" y="323.28" width="28.91" height="8.00" fill="#5d9d6c" />
<rect x="1110.05" y="332.58" width="32.70" height="8.00" fill="#5d9d6c" />
<rect x="1110.05" y="341.89" width="28.28" height="8.00" fill="#5d9d6c" />
<rect x="1110.05" y="351.19" width="18.33" height="8.00" fill="#5d9d6c" />
<rect x="1110.05" y="360.49" width="15.17" height="8.00" fill="#b34b56" />
<rect x="1110.05" y="369.80" width="8.06" height="8.00" fill="#5d9d6c" />
<rect x="1110.05" y="379.10" width="3.50" height="8.00" fill="#5d9d6c" />
<rect x="1110.05" y="388.40" width="3.50" height="8.00" fill="#5d9d6c" />
<rect x="1110.05" y="397.71" width="4.74" height="8.00" fill="#5d9d6c" />
<rect x="1110.05" y="407.01" width="11.22" height="8.00" fill="#5d9d6c" />
<rect x="1110.05" y="416.31" width="6.32" height="8.00" fill="#5d9d6c" />
<rect x="1110.05" y="425.61" width="4.27" height="8.00" fill="#5d9d6c" />
<rect x="1110.05" y="434.92" width="3.50" height="8.00" fill="#5d9d6c" />
<rect x="1110.05" y="444.22" width="3.50" height="8.00" fill="#5d9d6c" />
<rect x="1107.55" y="241.00" width="1.30" height="206.50" fill="#2fb884" opacity="0.6"/>
<rect x="1106.25" y="320.00" width="3.70" height="104.00" fill="#2fb884" />
<text x="1110.65" y="246.45" font-size="8" fill="#f4f4f4" text-anchor="start" >19</text>
<text x="1110.65" y="255.76" font-size="8" fill="#f4f4f4" text-anchor="start" >25</text>
<text x="1110.65" y="265.06" font-size="8" fill="#f4f4f4" text-anchor="start" >59</text>
<text x="1110.65" y="274.36" font-size="8" fill="#f4f4f4" text-anchor="start" >116</text>
<text x="1110.65" y="283.67" font-size="8" fill="#f4f4f4" text-anchor="start" >177</text>
<text x="1110.65" y="292.97" font-size="8" fill="#f4f4f4" text-anchor="start" >97</text>
<text x="1110.65" y="302.27" font-size="8" fill="#f4f4f4" text-anchor="start" >58</text>
<text x="1110.65" y="311.57" font-size="8" fill="#f4f4f4" text-anchor="start" >143</text>
<text x="1110.65" y="320.88" font-size="8" fill="#f4f4f4" text-anchor="start" >238</text>
<text x="1110.65" y="330.18" font-size="8" fill="#f4f4f4" text-anchor="start" >183</text>
<text x="1110.65" y="339.48" font-size="8" fill="#f4f4f4" text-anchor="start" >207</text>
<text x="1110.65" y="348.79" font-size="8" fill="#f4f4f4" text-anchor="start" >179</text>
<text x="1110.65" y="358.09" font-size="8" fill="#f4f4f4" text-anchor="start" >116</text>
<text x="1110.65" y="367.39" font-size="8" fill="#f4f4f4" text-anchor="start" >96</text>
<text x="1110.65" y="376.70" font-size="8" fill="#f4f4f4" text-anchor="start" >51</text>
<text x="1110.65" y="386.00" font-size="8" fill="#f4f4f4" text-anchor="start" >8</text>
<text x="1110.65" y="395.30" font-size="8" fill="#f4f4f4" text-anchor="start" >22</text>
<text x="1110.65" y="404.61" font-size="8" fill="#f4f4f4" text-anchor="start" >30</text>
<text x="1110.65" y="413.91" font-size="8" fill="#f4f4f4" text-anchor="start" >71</text>
<text x="1110.65" y="423.21" font-size="8" fill="#f4f4f4" text-anchor="start" >40</text>
<text x="1110.65" y="432.51" font-size="8" fill="#f4f4f4" text-anchor="start" >27</text>
<text x="1110.65" y="441.82" font-size="8" fill="#f4f4f4" text-anchor="start" >12</text>
<text x="1110.65" y="451.12" font-size="8" fill="#f4f4f4" text-anchor="start" >5</text>
<rect x="1154.46" y="276.77" width="3.50" height="8.00" fill="#5d9d6c" />
<rect x="1154.46" y="286.07" width="9.91" height="8.00" fill="#5d9d6c" />
<rect x="1154.46" y="295.37" width="12.74" height="8.00" fill="#5d9d6c" />
<rect x="1154.46" y="304.68" width="20.01" height="8.00" fill="#5d9d6c" />
<rect x="1155.06" y="313.98" width="36.40" height="8.00" fill="#5d9d6c" stroke="#f2f2f2" stroke-width="1.3"/>
<rect x="1154.46" y="323.28" width="33.56" height="8.00" fill="#5d9d6c" />
<rect x="1154.46" y="332.58" width="21.02" height="8.00" fill="#5d9d6c" />
<rect x="1154.46" y="341.89" width="27.49" height="8.00" fill="#b34b56" />
<rect x="1154.46" y="351.19" width="19.00" height="8.00" fill="#b34b56" />
<rect x="1154.46" y="360.49" width="3.50" height="8.00" fill="#5d9d6c" />
<rect x="1151.96" y="284.40" width="1.30" height="81.60" fill="#2fb884" opacity="0.6"/>
<rect x="1150.66" y="307.00" width="3.70" height="13.00" fill="#2fb884" />
<text x="1155.06" y="283.67" font-size="8" fill="#f4f4f4" text-anchor="start" >3</text>
<text x="1155.06" y="292.97" font-size="8" fill="#f4f4f4" text-anchor="start" >49</text>
<text x="1155.06" y="302.27" font-size="8" fill="#f4f4f4" text-anchor="start" >63</text>
<text x="1155.06" y="311.57" font-size="8" fill="#f4f4f4" text-anchor="start" >99</text>
<text x="1155.06" y="320.88" font-size="8" fill="#f4f4f4" text-anchor="start" >186</text>
<text x="1155.06" y="330.18" font-size="8" fill="#f4f4f4" text-anchor="start" >166</text>
<text x="1155.06" y="339.48" font-size="8" fill="#f4f4f4" text-anchor="start" >104</text>
<text x="1155.06" y="348.79" font-size="8" fill="#f4f4f4" text-anchor="start" >136</text>
<text x="1155.06" y="358.09" font-size="8" fill="#f4f4f4" text-anchor="start" >94</text>
<text x="1155.06" y="367.39" font-size="8" fill="#f4f4f4" text-anchor="start" >11</text>
<rect x="1198.87" y="276.77" width="3.50" height="8.00" fill="#b34b56" />
<rect x="1198.87" y="286.07" width="5.46" height="8.00" fill="#5d9d6c" />
<rect x="1198.87" y="295.37" width="3.85" height="8.00" fill="#b34b56" />
<rect x="1198.87" y="304.68" width="12.53" height="8.00" fill="#b34b56" />
<rect x="1199.47" y="313.98" width="36.40" height="8.00" fill="#5d9d6c" stroke="#f2f2f2" stroke-width="1.3"/>
<rect x="1198.87" y="323.28" width="9.06" height="8.00" fill="#b34b56" />
<rect x="1198.87" y="332.58" width="3.50" height="8.00" fill="#b34b56" />
<rect x="1196.37" y="275.70" width="1.30" height="63.00" fill="#e02a49" opacity="0.6"/>
<rect x="1195.07" y="307.00" width="3.70" height="29.70" fill="#e02a49" />
<text x="1199.47" y="283.67" font-size="8" fill="#f4f4f4" text-anchor="start" >24</text>
<text x="1199.47" y="292.97" font-size="8" fill="#f4f4f4" text-anchor="start" >44</text>
<text x="1199.47" y="302.27" font-size="8" fill="#f4f4f4" text-anchor="start" >31</text>
<text x="1199.47" y="311.57" font-size="8" fill="#f4f4f4" text-anchor="start" >101</text>
<text x="1199.47" y="320.88" font-size="8" fill="#f4f4f4" text-anchor="start" >303</text>
<text x="1199.47" y="330.18" font-size="8" fill="#f4f4f4" text-anchor="start" >73</text>
<text x="1199.47" y="339.48" font-size="8" fill="#f4f4f4" text-anchor="start" >20</text>
<rect x="1243.27" y="323.28" width="24.03" height="8.00" fill="#5d9d6c" />
<rect x="1243.27" y="332.58" width="5.04" height="8.00" fill="#b34b56" />
<rect x="1243.27" y="341.89" width="15.12" height="8.00" fill="#b34b56" />
<rect x="1243.27" y="351.19" width="10.08" height="8.00" fill="#b34b56" />
<rect x="1243.27" y="360.49" width="8.53" height="8.00" fill="#b34b56" />
<rect x="1243.27" y="369.80" width="21.32" height="8.00" fill="#b34b56" />
<rect x="1243.27" y="379.10" width="25.58" height="8.00" fill="#b34b56" />
<rect x="1243.27" y="388.40" width="15.51" height="8.00" fill="#5d9d6c" />
<rect x="1243.27" y="397.71" width="33.34" height="8.00" fill="#b34b56" />
<rect x="1243.87" y="407.01" width="36.40" height="8.00" fill="#b34b56" stroke="#f2f2f2" stroke-width="1.3"/>
<rect x="1243.27" y="416.31" width="14.73" height="8.00" fill="#b34b56" />
<rect x="1243.27" y="425.61" width="14.73" height="8.00" fill="#b34b56" />
<rect x="1243.27" y="434.92" width="3.50" height="8.00" fill="#b34b56" />
<rect x="1240.77" y="322.70" width="1.30" height="114.90" fill="#e02a49" opacity="0.6"/>
<rect x="1239.47" y="336.00" width="3.70" height="52.00" fill="#e02a49" />
<text x="1243.87" y="330.18" font-size="8" fill="#f4f4f4" text-anchor="start" >62</text>
<text x="1243.87" y="339.48" font-size="8" fill="#f4f4f4" text-anchor="start" >13</text>
<text x="1243.87" y="348.79" font-size="8" fill="#f4f4f4" text-anchor="start" >39</text>
<text x="1243.87" y="358.09" font-size="8" fill="#f4f4f4" text-anchor="start" >26</text>
<text x="1243.87" y="367.39" font-size="8" fill="#f4f4f4" text-anchor="start" >22</text>
<text x="1243.87" y="376.70" font-size="8" fill="#f4f4f4" text-anchor="start" >55</text>
<text x="1243.87" y="386.00" font-size="8" fill="#f4f4f4" text-anchor="start" >66</text>
<text x="1243.87" y="395.30" font-size="8" fill="#f4f4f4" text-anchor="start" >40</text>
<text x="1243.87" y="404.61" font-size="8" fill="#f4f4f4" text-anchor="start" >86</text>
<text x="1243.87" y="413.91" font-size="8" fill="#f4f4f4" text-anchor="start" >97</text>
<text x="1243.87" y="423.21" font-size="8" fill="#f4f4f4" text-anchor="start" >38</text>
<text x="1243.87" y="432.51" font-size="8" fill="#f4f4f4" text-anchor="start" >38</text>
<text x="1243.87" y="441.82" font-size="8" fill="#f4f4f4" text-anchor="start" >4</text>
<rect x="1287.68" y="369.80" width="25.45" height="8.00" fill="#5d9d6c" />
<rect x="1287.68" y="379.10" width="26.67" height="8.00" fill="#b34b56" />
<rect x="1287.68" y="388.40" width="40.00" height="8.00" fill="#5d9d6c" />
<rect x="1285.18" y="367.00" width="1.30" height="25.00" fill="#2fb884" opacity="0.6"/>
<rect x="1283.88" y="369.60" width="3.70" height="18.40" fill="#2fb884" />
<text x="1288.28" y="376.70" font-size="8" fill="#f4f4f4" text-anchor="start" >21</text>
<text x="1288.28" y="386.00" font-size="8" fill="#f4f4f4" text-anchor="start" >22</text>
<text x="1288.28" y="395.30" font-size="8" fill="#f4f4f4" text-anchor="start" >33</text>
</g>
<rect x="1486.50" y="71.50" width="18.72" height="9.20" fill="#1b1e24" opacity="0.7"/>
<rect x="1505.22" y="71.50" width="3.28" height="9.20" fill="#3d2c33" />
<text x="1489.20" y="79.00" font-size="8" fill="#e29a9a" text-anchor="start" >8</text>
<rect x="1486.50" y="80.80" width="17.90" height="9.20" fill="#1b1e24" opacity="0.7"/>
<rect x="1504.40" y="80.80" width="4.10" height="9.20" fill="#3d2c33" />
<text x="1489.20" y="88.30" font-size="8" fill="#e29a9a" text-anchor="start" >10</text>
<rect x="1486.50" y="90.11" width="17.08" height="9.20" fill="#1b1e24" opacity="0.7"/>
<rect x="1503.58" y="90.11" width="4.92" height="9.20" fill="#3d2c33" />
<text x="1489.20" y="97.61" font-size="8" fill="#e29a9a" text-anchor="start" >12</text>
<rect x="1486.50" y="99.41" width="13.39" height="9.20" fill="#1b1e24" opacity="0.7"/>
<rect x="1499.89" y="99.41" width="8.61" height="9.20" fill="#3d2c33" />
<text x="1489.20" y="106.91" font-size="8" fill="#e29a9a" text-anchor="start" >21</text>
<rect x="1486.50" y="108.71" width="14.62" height="9.20" fill="#1b1e24" opacity="0.7"/>
<rect x="1501.12" y="108.71" width="7.38" height="9.20" fill="#3d2c33" />
<text x="1489.20" y="116.21" font-size="8" fill="#e29a9a" text-anchor="start" >18</text>
<rect x="1486.50" y="118.02" width="12.98" height="9.20" fill="#1b1e24" opacity="0.7"/>
<rect x="1499.48" y="118.02" width="9.02" height="9.20" fill="#3d2c33" />
<text x="1489.20" y="125.52" font-size="8" fill="#e29a9a" text-anchor="start" >22</text>
<rect x="1435.00" y="127.32" width="73.00" height="9.20" fill="#c8636c" />
<text x="1489.20" y="134.82" font-size="8" fill="#f2e6e6" text-anchor="start" >177</text>
<rect x="1486.50" y="136.62" width="19.54" height="9.20" fill="#1b1e24" opacity="0.7"/>
<rect x="1506.04" y="136.62" width="2.46" height="9.20" fill="#3d2c33" />
<text x="1489.20" y="144.12" font-size="8" fill="#e29a9a" text-anchor="start" >6</text>
<rect x="1486.50" y="145.92" width="16.67" height="9.20" fill="#1b1e24" opacity="0.7"/>
<rect x="1503.17" y="145.92" width="5.33" height="9.20" fill="#3d2c33" />
<text x="1489.20" y="153.42" font-size="8" fill="#e29a9a" text-anchor="start" >13</text>
<rect x="1486.50" y="155.23" width="10.52" height="9.20" fill="#1b1e24" opacity="0.7"/>
<rect x="1497.02" y="155.23" width="11.48" height="9.20" fill="#3d2c33" />
<text x="1489.20" y="162.73" font-size="8" fill="#e29a9a" text-anchor="start" >28</text>
<rect x="1486.50" y="164.53" width="0.68" height="9.20" fill="#1b1e24" opacity="0.7"/>
<rect x="1487.18" y="164.53" width="21.32" height="9.20" fill="#3d2c33" />
<text x="1489.20" y="172.03" font-size="8" fill="#e29a9a" text-anchor="start" >52</text>
<rect x="1486.50" y="173.83" width="19.54" height="9.20" fill="#1b1e24" opacity="0.7"/>
<rect x="1506.04" y="173.83" width="2.46" height="9.20" fill="#3d2c33" />
<text x="1489.20" y="181.33" font-size="8" fill="#e29a9a" text-anchor="start" >6</text>
<rect x="1486.50" y="183.14" width="18.31" height="9.20" fill="#1b1e24" opacity="0.7"/>
<rect x="1504.81" y="183.14" width="3.69" height="9.20" fill="#3d2c33" />
<text x="1489.20" y="190.64" font-size="8" fill="#e29a9a" text-anchor="start" >9</text>
<rect x="1486.50" y="192.44" width="20.80" height="9.20" fill="#1b1e24" opacity="0.7"/>
<rect x="1507.30" y="192.44" width="1.20" height="9.20" fill="#3d2c33" />
<text x="1489.20" y="199.94" font-size="8" fill="#e29a9a" text-anchor="start" >1</text>
<rect x="1486.50" y="201.74" width="18.31" height="9.20" fill="#1b1e24" opacity="0.7"/>
<rect x="1504.81" y="201.74" width="3.69" height="9.20" fill="#3d2c33" />
<text x="1489.20" y="209.24" font-size="8" fill="#e29a9a" text-anchor="start" >9</text>
<rect x="1486.50" y="211.05" width="18.31" height="9.20" fill="#1b1e24" opacity="0.7"/>
<rect x="1504.81" y="211.05" width="3.69" height="9.20" fill="#3d2c33" />
<text x="1489.20" y="218.55" font-size="8" fill="#e29a9a" text-anchor="start" >9</text>
<rect x="1486.50" y="220.35" width="11.75" height="9.20" fill="#1b1e24" opacity="0.7"/>
<rect x="1498.25" y="220.35" width="10.25" height="9.20" fill="#3d2c33" />
<text x="1489.20" y="227.85" font-size="8" fill="#e29a9a" text-anchor="start" >25</text>
<rect x="1486.50" y="229.65" width="17.90" height="9.20" fill="#1b1e24" opacity="0.7"/>
<rect x="1504.40" y="229.65" width="4.10" height="9.20" fill="#3d2c33" />
<text x="1489.20" y="237.15" font-size="8" fill="#e29a9a" text-anchor="start" >10</text>
<rect x="1486.50" y="238.95" width="16.67" height="9.20" fill="#1b1e24" opacity="0.7"/>
<rect x="1503.17" y="238.95" width="5.33" height="9.20" fill="#3d2c33" />
<text x="1489.20" y="246.45" font-size="8" fill="#e29a9a" text-anchor="start" >13</text>
<rect x="1486.50" y="248.26" width="19.95" height="9.20" fill="#1b1e24" opacity="0.7"/>
<rect x="1506.45" y="248.26" width="2.05" height="9.20" fill="#3d2c33" />
<text x="1489.20" y="255.76" font-size="8" fill="#e29a9a" text-anchor="start" >5</text>
<rect x="1486.50" y="257.56" width="14.62" height="9.20" fill="#1b1e24" opacity="0.7"/>
<rect x="1501.12" y="257.56" width="7.38" height="9.20" fill="#3d2c33" />
<text x="1489.20" y="265.06" font-size="8" fill="#e29a9a" text-anchor="start" >18</text>
<rect x="1486.50" y="266.86" width="14.21" height="9.20" fill="#1b1e24" opacity="0.7"/>
<rect x="1500.71" y="266.86" width="7.79" height="9.20" fill="#3d2c33" />
<text x="1489.20" y="274.36" font-size="8" fill="#e29a9a" text-anchor="start" >19</text>
<rect x="1486.50" y="276.17" width="10.11" height="9.20" fill="#1b1e24" opacity="0.7"/>
<rect x="1496.61" y="276.17" width="11.89" height="9.20" fill="#3d2c33" />
<text x="1489.20" y="283.67" font-size="8" fill="#e29a9a" text-anchor="start" >29</text>
<rect x="1486.50" y="285.47" width="15.85" height="9.20" fill="#1b1e24" opacity="0.7"/>
<rect x="1502.35" y="285.47" width="6.15" height="9.20" fill="#3d2c33" />
<text x="1489.20" y="292.97" font-size="8" fill="#e29a9a" text-anchor="start" >15</text>
<rect x="1486.50" y="294.77" width="18.31" height="9.20" fill="#1b1e24" opacity="0.7"/>
<rect x="1504.81" y="294.77" width="3.69" height="9.20" fill="#3d2c33" />
<text x="1489.20" y="302.27" font-size="8" fill="#e29a9a" text-anchor="start" >9</text>
<rect x="1486.50" y="304.07" width="20.36" height="9.20" fill="#1b1e24" opacity="0.7"/>
<rect x="1506.86" y="304.07" width="1.64" height="9.20" fill="#3d2c33" />
<text x="1489.20" y="311.57" font-size="8" fill="#e29a9a" text-anchor="start" >4</text>
<rect x="1486.50" y="313.38" width="6.42" height="9.20" fill="#1b1e24" opacity="0.7"/>
<rect x="1492.92" y="313.38" width="15.58" height="9.20" fill="#3d2c33" />
<text x="1489.20" y="320.88" font-size="8" fill="#e29a9a" text-anchor="start" >38</text>
<rect x="1486.50" y="322.68" width="16.26" height="9.20" fill="#1b1e24" opacity="0.7"/>
<rect x="1502.76" y="322.68" width="5.74" height="9.20" fill="#3d2c33" />
<text x="1489.20" y="330.18" font-size="8" fill="#e29a9a" text-anchor="start" >14</text>
<rect x="1486.50" y="331.98" width="13.39" height="9.20" fill="#1b1e24" opacity="0.7"/>
<rect x="1499.89" y="331.98" width="8.61" height="9.20" fill="#3d2c33" />
<text x="1489.20" y="339.48" font-size="8" fill="#e29a9a" text-anchor="start" >21</text>
<rect x="1486.50" y="341.29" width="8.88" height="9.20" fill="#1b1e24" opacity="0.7"/>
<rect x="1495.38" y="341.29" width="13.12" height="9.20" fill="#3d2c33" />
<text x="1489.20" y="348.79" font-size="8" fill="#e29a9a" text-anchor="start" >32</text>
<rect x="1486.50" y="350.59" width="-5.47" height="9.20" fill="#1b1e24" opacity="0.7"/>
<rect x="1481.03" y="350.59" width="27.47" height="9.20" fill="#3d2c33" />
<text x="1489.20" y="358.09" font-size="8" fill="#e29a9a" text-anchor="start" >67</text>
<rect x="1486.50" y="359.89" width="-10.39" height="9.20" fill="#1b1e24" opacity="0.7"/>
<rect x="1476.11" y="359.89" width="32.39" height="9.20" fill="#3d2c33" />
<text x="1489.20" y="367.39" font-size="8" fill="#e29a9a" text-anchor="start" >79</text>
<rect x="1486.50" y="369.20" width="19.13" height="9.20" fill="#1b1e24" opacity="0.7"/>
<rect x="1505.63" y="369.20" width="2.87" height="9.20" fill="#3d2c33" />
<text x="1489.20" y="376.70" font-size="8" fill="#e29a9a" text-anchor="start" >7</text>
<rect x="1486.50" y="378.50" width="2.73" height="9.20" fill="#1b1e24" opacity="0.7"/>
<rect x="1489.23" y="378.50" width="19.27" height="9.20" fill="#22382b" />
<text x="1489.20" y="386.00" font-size="8" fill="#3cc23c" text-anchor="start" >47</text>
<rect x="1486.50" y="387.80" width="7.65" height="9.20" fill="#1b1e24" opacity="0.7"/>
<rect x="1494.15" y="387.80" width="14.35" height="9.20" fill="#22382b" />
<text x="1489.20" y="395.30" font-size="8" fill="#3cc23c" text-anchor="start" >35</text>
<rect x="1486.50" y="397.11" width="19.54" height="9.20" fill="#1b1e24" opacity="0.7"/>
<rect x="1506.04" y="397.11" width="2.46" height="9.20" fill="#22382b" />
<text x="1489.20" y="404.61" font-size="8" fill="#3cc23c" text-anchor="start" >6</text>
<rect x="1486.50" y="406.41" width="12.98" height="9.20" fill="#1b1e24" opacity="0.7"/>
<rect x="1499.48" y="406.41" width="9.02" height="9.20" fill="#22382b" />
<text x="1489.20" y="413.91" font-size="8" fill="#3cc23c" text-anchor="start" >22</text>
<rect x="1486.50" y="415.71" width="18.72" height="9.20" fill="#1b1e24" opacity="0.7"/>
<rect x="1505.22" y="415.71" width="3.28" height="9.20" fill="#22382b" />
<text x="1489.20" y="423.21" font-size="8" fill="#3cc23c" text-anchor="start" >8</text>
<rect x="1486.50" y="425.01" width="11.75" height="9.20" fill="#1b1e24" opacity="0.7"/>
<rect x="1498.25" y="425.01" width="10.25" height="9.20" fill="#22382b" />
<text x="1489.20" y="432.51" font-size="8" fill="#3cc23c" text-anchor="start" >25</text>
<rect x="1486.50" y="434.32" width="16.26" height="9.20" fill="#1b1e24" opacity="0.7"/>
<rect x="1502.76" y="434.32" width="5.74" height="9.20" fill="#22382b" />
<text x="1489.20" y="441.82" font-size="8" fill="#3cc23c" text-anchor="start" >14</text>
<rect x="1486.50" y="443.62" width="16.67" height="9.20" fill="#1b1e24" opacity="0.7"/>
<rect x="1503.17" y="443.62" width="5.33" height="9.20" fill="#22382b" />
<text x="1489.20" y="451.12" font-size="8" fill="#3cc23c" text-anchor="start" >13</text>
<rect x="1486.50" y="452.92" width="19.54" height="9.20" fill="#1b1e24" opacity="0.7"/>
<rect x="1506.04" y="452.92" width="2.46" height="9.20" fill="#22382b" />
<text x="1489.20" y="460.42" font-size="8" fill="#3cc23c" text-anchor="start" >6</text>
<rect x="1486.50" y="462.23" width="17.49" height="9.20" fill="#1b1e24" opacity="0.7"/>
<rect x="1503.99" y="462.23" width="4.51" height="9.20" fill="#22382b" />
<text x="1489.20" y="469.73" font-size="8" fill="#3cc23c" text-anchor="start" >11</text>
<rect x="1486.50" y="471.53" width="20.77" height="9.20" fill="#1b1e24" opacity="0.7"/>
<rect x="1507.27" y="471.53" width="1.23" height="9.20" fill="#22382b" />
<text x="1489.20" y="479.03" font-size="8" fill="#3cc23c" text-anchor="start" >3</text>
<rect x="1486.50" y="480.83" width="18.31" height="9.20" fill="#1b1e24" opacity="0.7"/>
<rect x="1504.81" y="480.83" width="3.69" height="9.20" fill="#22382b" />
<text x="1489.20" y="488.33" font-size="8" fill="#3cc23c" text-anchor="start" >9</text>
<rect x="1486.50" y="490.13" width="18.31" height="9.20" fill="#1b1e24" opacity="0.7"/>
<rect x="1504.81" y="490.13" width="3.69" height="9.20" fill="#22382b" />
<text x="1489.20" y="497.63" font-size="8" fill="#3cc23c" text-anchor="start" >9</text>
<rect x="1486.50" y="499.44" width="6.01" height="9.20" fill="#1b1e24" opacity="0.7"/>
<rect x="1492.51" y="499.44" width="15.99" height="9.20" fill="#22382b" />
<text x="1489.20" y="506.94" font-size="8" fill="#3cc23c" text-anchor="start" >39</text>
<rect x="1486.50" y="508.74" width="20.36" height="9.20" fill="#1b1e24" opacity="0.7"/>
<rect x="1506.86" y="508.74" width="1.64" height="9.20" fill="#22382b" />
<text x="1489.20" y="516.24" font-size="8" fill="#3cc23c" text-anchor="start" >4</text>
<rect x="1486.50" y="518.04" width="20.77" height="9.20" fill="#1b1e24" opacity="0.7"/>
<rect x="1507.27" y="518.04" width="1.23" height="9.20" fill="#22382b" />
<text x="1489.20" y="525.54" font-size="8" fill="#3cc23c" text-anchor="start" >3</text>
<rect x="1486.50" y="527.35" width="20.80" height="9.20" fill="#1b1e24" opacity="0.7"/>
<rect x="1507.30" y="527.35" width="1.20" height="9.20" fill="#22382b" />
<text x="1489.20" y="534.85" font-size="8" fill="#3cc23c" text-anchor="start" >1</text>
<rect x="1486.50" y="536.65" width="19.95" height="9.20" fill="#1b1e24" opacity="0.7"/>
<rect x="1506.45" y="536.65" width="2.05" height="9.20" fill="#22382b" />
<text x="1489.20" y="544.15" font-size="8" fill="#3cc23c" text-anchor="start" >5</text>
<rect x="1486.50" y="545.95" width="20.80" height="9.20" fill="#1b1e24" opacity="0.7"/>
<rect x="1507.30" y="545.95" width="1.20" height="9.20" fill="#22382b" />
<text x="1489.20" y="553.45" font-size="8" fill="#3cc23c" text-anchor="start" >2</text>
<rect x="1486.50" y="555.26" width="18.72" height="9.20" fill="#1b1e24" opacity="0.7"/>
<rect x="1505.22" y="555.26" width="3.28" height="9.20" fill="#22382b" />
<text x="1489.20" y="562.76" font-size="8" fill="#3cc23c" text-anchor="start" >8</text>
<rect x="1486.50" y="564.56" width="15.85" height="9.20" fill="#1b1e24" opacity="0.7"/>
<rect x="1502.35" y="564.56" width="6.15" height="9.20" fill="#22382b" />
<text x="1489.20" y="572.06" font-size="8" fill="#3cc23c" text-anchor="start" >15</text>
<rect x="1486.50" y="573.86" width="14.21" height="9.20" fill="#1b1e24" opacity="0.7"/>
<rect x="1500.71" y="573.86" width="7.79" height="9.20" fill="#22382b" />
<text x="1489.20" y="581.36" font-size="8" fill="#3cc23c" text-anchor="start" >19</text>
<rect x="1486.50" y="583.16" width="17.49" height="9.20" fill="#1b1e24" opacity="0.7"/>
<rect x="1503.99" y="583.16" width="4.51" height="9.20" fill="#22382b" />
<text x="1489.20" y="590.66" font-size="8" fill="#3cc23c" text-anchor="start" >11</text>
<rect x="1486.50" y="592.47" width="16.26" height="9.20" fill="#1b1e24" opacity="0.7"/>
<rect x="1502.76" y="592.47" width="5.74" height="9.20" fill="#22382b" />
<text x="1489.20" y="599.97" font-size="8" fill="#3cc23c" text-anchor="start" >14</text>
<rect x="1486.50" y="601.77" width="18.31" height="9.20" fill="#1b1e24" opacity="0.7"/>
<rect x="1504.81" y="601.77" width="3.69" height="9.20" fill="#22382b" />
<text x="1489.20" y="609.27" font-size="8" fill="#3cc23c" text-anchor="start" >9</text>
<rect x="1486.50" y="611.07" width="19.95" height="9.20" fill="#1b1e24" opacity="0.7"/>
<rect x="1506.45" y="611.07" width="2.05" height="9.20" fill="#22382b" />
<text x="1489.20" y="618.57" font-size="8" fill="#3cc23c" text-anchor="start" >5</text>
<rect x="1486.50" y="620.38" width="20.36" height="9.20" fill="#1b1e24" opacity="0.7"/>
<rect x="1506.86" y="620.38" width="1.64" height="9.20" fill="#22382b" />
<text x="1489.20" y="627.88" font-size="8" fill="#3cc23c" text-anchor="start" >4</text>
<rect x="1486.50" y="629.68" width="20.80" height="9.20" fill="#1b1e24" opacity="0.7"/>
<rect x="1507.30" y="629.68" width="1.20" height="9.20" fill="#22382b" />
<text x="1489.20" y="637.18" font-size="8" fill="#3cc23c" text-anchor="start" >2</text>
<rect x="1486.50" y="638.98" width="19.95" height="9.20" fill="#1b1e24" opacity="0.7"/>
<rect x="1506.45" y="638.98" width="2.05" height="9.20" fill="#22382b" />
<text x="1489.20" y="646.48" font-size="8" fill="#3cc23c" text-anchor="start" >5</text>
<rect x="1486.50" y="648.29" width="20.77" height="9.20" fill="#1b1e24" opacity="0.7"/>
<rect x="1507.27" y="648.29" width="1.23" height="9.20" fill="#22382b" />
<text x="1489.20" y="655.79" font-size="8" fill="#3cc23c" text-anchor="start" >3</text>
<rect x="1486.50" y="657.59" width="20.80" height="9.20" fill="#1b1e24" opacity="0.7"/>
<rect x="1507.30" y="657.59" width="1.20" height="9.20" fill="#22382b" />
<text x="1489.20" y="665.09" font-size="8" fill="#3cc23c" text-anchor="start" >1</text>
<rect x="1486.50" y="666.89" width="19.54" height="9.20" fill="#1b1e24" opacity="0.7"/>
<rect x="1506.04" y="666.89" width="2.46" height="9.20" fill="#22382b" />
<text x="1489.20" y="674.39" font-size="8" fill="#3cc23c" text-anchor="start" >6</text>
<rect x="1486.50" y="676.20" width="20.77" height="9.20" fill="#1b1e24" opacity="0.7"/>
<rect x="1507.27" y="676.20" width="1.23" height="9.20" fill="#22382b" />
<text x="1489.20" y="683.70" font-size="8" fill="#3cc23c" text-anchor="start" >3</text>
<rect x="1486.50" y="685.50" width="16.67" height="9.20" fill="#1b1e24" opacity="0.7"/>
<rect x="1503.17" y="685.50" width="5.33" height="9.20" fill="#22382b" />
<text x="1489.20" y="693.00" font-size="8" fill="#3cc23c" text-anchor="start" >13</text>
<rect x="1486.50" y="704.10" width="20.36" height="9.20" fill="#1b1e24" opacity="0.7"/>
<rect x="1506.86" y="704.10" width="1.64" height="9.20" fill="#22382b" />
<text x="1489.20" y="711.60" font-size="8" fill="#3cc23c" text-anchor="start" >4</text>
<text x="1473.00" y="376.70" font-size="8" fill="#3cc23c" text-anchor="start" >14</text>
<g clip-path="url(#vp)">
<rect x="37.80" y="238.25" width="0.32" height="8.00" fill="#4f9664" />
<rect x="38.12" y="238.25" width="0.55" height="8.00" fill="#b9505a" />
<text transform="matrix(1,0,0,0.78,38,245.25)" font-size="9" fill="#eef0f0" letter-spacing="0.8">7; 12</text>
<rect x="37.80" y="247.56" width="0.68" height="8.00" fill="#4f9664" />
<rect x="38.48" y="247.56" width="0.45" height="8.00" fill="#b9505a" />
<text transform="matrix(1,0,0,0.78,38,254.56)" font-size="9" fill="#eef0f0" letter-spacing="0.8">15; 10</text>
<rect x="37.80" y="256.86" width="1.27" height="8.00" fill="#4f9664" />
<rect x="39.07" y="256.86" width="1.41" height="8.00" fill="#b9505a" />
<text transform="matrix(1,0,0,0.78,38,263.86)" font-size="9" fill="#eef0f0" letter-spacing="0.8">28; 31</text>
<rect x="37.80" y="266.16" width="2.37" height="8.00" fill="#4f9664" />
<rect x="40.17" y="266.16" width="2.91" height="8.00" fill="#b9505a" />
<text transform="matrix(1,0,0,0.78,38,273.16)" font-size="9" fill="#eef0f0" letter-spacing="0.8">52; 64</text>
<rect x="37.80" y="275.47" width="5.55" height="8.00" fill="#4f9664" />
<rect x="43.35" y="275.47" width="3.73" height="8.00" fill="#b9505a" />
<text transform="matrix(1,0,0,0.78,38,282.47)" font-size="9" fill="#eef0f0" letter-spacing="0.8">122; 82</text>
<rect x="37.80" y="284.77" width="4.41" height="8.00" fill="#4f9664" />
<rect x="42.21" y="284.77" width="4.28" height="8.00" fill="#b9505a" />
<text transform="matrix(1,0,0,0.78,38,291.77)" font-size="9" fill="#eef0f0" letter-spacing="0.8">97; 94</text>
<rect x="37.80" y="294.07" width="4.50" height="8.00" fill="#4f9664" />
<rect x="42.30" y="294.07" width="2.41" height="8.00" fill="#b9505a" />
<text transform="matrix(1,0,0,0.78,38,301.07)" font-size="9" fill="#eef0f0" letter-spacing="0.8">99; 53</text>
<rect x="37.80" y="303.38" width="7.51" height="8.00" fill="#4f9664" />
<rect x="45.31" y="303.38" width="8.14" height="8.00" fill="#b9505a" />
<text transform="matrix(1,0,0,0.78,38,310.38)" font-size="9" fill="#eef0f0" letter-spacing="0.8">165; 179</text>
<rect x="37.80" y="312.68" width="24.39" height="8.00" fill="#4f9664" />
<rect x="62.19" y="312.68" width="8.74" height="8.00" fill="#b9505a" />
<text transform="matrix(1,0,0,0.78,38,319.68)" font-size="9" fill="#eef0f0" letter-spacing="0.8">536; 192</text>
<rect x="37.80" y="321.98" width="13.56" height="8.00" fill="#4f9664" />
<rect x="51.36" y="321.98" width="8.51" height="8.00" fill="#b9505a" />
<text transform="matrix(1,0,0,0.78,38,328.98)" font-size="9" fill="#eef0f0" letter-spacing="0.8">298; 187</text>
<rect x="37.80" y="331.28" width="9.15" height="8.00" fill="#4f9664" />
<rect x="46.95" y="331.28" width="6.55" height="8.00" fill="#b9505a" />
<text transform="matrix(1,0,0,0.78,38,338.28)" font-size="9" fill="#eef0f0" letter-spacing="0.8">201; 144</text>
<rect x="37.80" y="340.59" width="7.69" height="8.00" fill="#4f9664" />
<rect x="45.49" y="340.59" width="8.42" height="8.00" fill="#b9505a" />
<text transform="matrix(1,0,0,0.78,38,347.59)" font-size="9" fill="#eef0f0" letter-spacing="0.8">169; 185</text>
<rect x="37.80" y="349.89" width="5.14" height="8.00" fill="#4f9664" />
<rect x="42.94" y="349.89" width="5.78" height="8.00" fill="#b9505a" />
<text transform="matrix(1,0,0,0.78,38,356.89)" font-size="9" fill="#eef0f0" letter-spacing="0.8">113; 127</text>
<rect x="37.80" y="359.19" width="2.32" height="8.00" fill="#4f9664" />
<rect x="40.12" y="359.19" width="3.46" height="8.00" fill="#b9505a" />
<text transform="matrix(1,0,0,0.78,38,366.19)" font-size="9" fill="#eef0f0" letter-spacing="0.8">51; 76</text>
<rect x="37.80" y="368.50" width="2.23" height="8.00" fill="#4f9664" />
<rect x="40.03" y="368.50" width="3.05" height="8.00" fill="#b9505a" />
<text transform="matrix(1,0,0,0.78,38,375.50)" font-size="9" fill="#eef0f0" letter-spacing="0.8">49; 67</text>
<rect x="37.80" y="377.80" width="2.00" height="8.00" fill="#4f9664" />
<rect x="39.80" y="377.80" width="2.18" height="8.00" fill="#b9505a" />
<text transform="matrix(1,0,0,0.78,38,384.80)" font-size="9" fill="#eef0f0" letter-spacing="0.8">44; 48</text>
<rect x="37.80" y="387.10" width="3.09" height="8.00" fill="#4f9664" />
<rect x="40.89" y="387.10" width="1.27" height="8.00" fill="#b9505a" />
<text transform="matrix(1,0,0,0.78,38,394.10)" font-size="9" fill="#eef0f0" letter-spacing="0.8">68; 28</text>
<rect x="37.80" y="396.41" width="2.14" height="8.00" fill="#4f9664" />
<rect x="39.94" y="396.41" width="3.14" height="8.00" fill="#b9505a" />
<text transform="matrix(1,0,0,0.78,38,403.41)" font-size="9" fill="#eef0f0" letter-spacing="0.8">47; 69</text>
<rect x="37.80" y="405.71" width="4.28" height="8.00" fill="#4f9664" />
<rect x="42.08" y="405.71" width="3.28" height="8.00" fill="#b9505a" />
<text transform="matrix(1,0,0,0.78,38,412.71)" font-size="9" fill="#eef0f0" letter-spacing="0.8">94; 72</text>
<rect x="37.80" y="415.01" width="2.23" height="8.00" fill="#4f9664" />
<rect x="40.03" y="415.01" width="2.18" height="8.00" fill="#b9505a" />
<text transform="matrix(1,0,0,0.78,38,422.01)" font-size="9" fill="#eef0f0" letter-spacing="0.8">49; 48</text>
<rect x="37.80" y="424.31" width="2.68" height="8.00" fill="#4f9664" />
<rect x="40.48" y="424.31" width="3.00" height="8.00" fill="#b9505a" />
<text transform="matrix(1,0,0,0.78,38,431.31)" font-size="9" fill="#eef0f0" letter-spacing="0.8">59; 66</text>
<rect x="37.80" y="433.62" width="4.00" height="8.00" fill="#4f9664" />
<rect x="41.80" y="433.62" width="2.41" height="8.00" fill="#b9505a" />
<text transform="matrix(1,0,0,0.78,38,440.62)" font-size="9" fill="#eef0f0" letter-spacing="0.8">88; 53</text>
<rect x="37.80" y="442.92" width="2.27" height="8.00" fill="#4f9664" />
<rect x="40.07" y="442.92" width="2.50" height="8.00" fill="#b9505a" />
<text transform="matrix(1,0,0,0.78,38,449.92)" font-size="9" fill="#eef0f0" letter-spacing="0.8">50; 55</text>
<rect x="37.80" y="452.22" width="1.73" height="8.00" fill="#4f9664" />
<rect x="39.53" y="452.22" width="0.96" height="8.00" fill="#b9505a" />
<text transform="matrix(1,0,0,0.78,38,459.22)" font-size="9" fill="#eef0f0" letter-spacing="0.8">38; 21</text>
<rect x="37.80" y="461.53" width="1.14" height="8.00" fill="#4f9664" />
<rect x="38.94" y="461.53" width="0.41" height="8.00" fill="#b9505a" />
<text transform="matrix(1,0,0,0.78,38,468.53)" font-size="9" fill="#eef0f0" letter-spacing="0.8">25; 9</text>
<rect x="37.80" y="470.83" width="0.77" height="8.00" fill="#4f9664" />
<rect x="38.57" y="470.83" width="0.86" height="8.00" fill="#b9505a" />
<text transform="matrix(1,0,0,0.78,38,477.83)" font-size="9" fill="#eef0f0" letter-spacing="0.8">17; 19</text>
<rect x="37.80" y="480.13" width="1.41" height="8.00" fill="#4f9664" />
<rect x="39.21" y="480.13" width="1.00" height="8.00" fill="#b9505a" />
<text transform="matrix(1,0,0,0.78,38,487.13)" font-size="9" fill="#eef0f0" letter-spacing="0.8">31; 22</text>
<rect x="37.80" y="489.44" width="4.09" height="8.00" fill="#4f9664" />
<rect x="41.89" y="489.44" width="5.78" height="8.00" fill="#b9505a" />
<text transform="matrix(1,0,0,0.78,38,496.44)" font-size="9" fill="#eef0f0" letter-spacing="0.8">90; 127</text>
<rect x="37.80" y="498.74" width="14.38" height="8.00" fill="#4f9664" />
<rect x="52.18" y="498.74" width="2.37" height="8.00" fill="#b9505a" />
<text transform="matrix(1,0,0,0.78,38,505.74)" font-size="9" fill="#eef0f0" letter-spacing="0.8">316; 52</text>
<rect x="37.80" y="508.04" width="4.78" height="8.00" fill="#4f9664" />
<rect x="42.58" y="508.04" width="5.73" height="8.00" fill="#b9505a" />
<text transform="matrix(1,0,0,0.78,38,515.04)" font-size="9" fill="#eef0f0" letter-spacing="0.8">105; 126</text>
<rect x="37.80" y="517.34" width="4.87" height="8.00" fill="#4f9664" />
<rect x="42.67" y="517.34" width="3.50" height="8.00" fill="#b9505a" />
<text transform="matrix(1,0,0,0.78,38,524.34)" font-size="9" fill="#eef0f0" letter-spacing="0.8">107; 77</text>
<rect x="37.80" y="526.65" width="3.46" height="8.00" fill="#4f9664" />
<rect x="41.26" y="526.65" width="3.46" height="8.00" fill="#b9505a" />
<text transform="matrix(1,0,0,0.78,38,533.65)" font-size="9" fill="#eef0f0" letter-spacing="0.8">76; 76</text>
<rect x="37.80" y="535.95" width="6.01" height="8.00" fill="#4f9664" />
<rect x="43.81" y="535.95" width="5.92" height="8.00" fill="#b9505a" />
<text transform="matrix(1,0,0,0.78,38,542.95)" font-size="9" fill="#eef0f0" letter-spacing="0.8">132; 130</text>
<rect x="37.80" y="545.25" width="5.82" height="8.00" fill="#4f9664" />
<rect x="43.62" y="545.25" width="5.51" height="8.00" fill="#b9505a" />
<text transform="matrix(1,0,0,0.78,38,552.25)" font-size="9" fill="#eef0f0" letter-spacing="0.8">128; 121</text>
<rect x="37.80" y="554.56" width="3.28" height="8.00" fill="#4f9664" />
<rect x="41.08" y="554.56" width="4.82" height="8.00" fill="#b9505a" />
<text transform="matrix(1,0,0,0.78,38,561.56)" font-size="9" fill="#eef0f0" letter-spacing="0.8">72; 106</text>
<rect x="37.80" y="563.86" width="2.41" height="8.00" fill="#4f9664" />
<rect x="40.21" y="563.86" width="1.96" height="8.00" fill="#b9505a" />
<text transform="matrix(1,0,0,0.78,38,570.86)" font-size="9" fill="#eef0f0" letter-spacing="0.8">53; 43</text>
<rect x="37.80" y="573.16" width="8.96" height="8.00" fill="#4f9664" />
<rect x="46.76" y="573.16" width="4.14" height="8.00" fill="#b9505a" />
<text transform="matrix(1,0,0,0.78,38,580.16)" font-size="9" fill="#eef0f0" letter-spacing="0.8">197; 91</text>
<rect x="37.80" y="582.47" width="14.33" height="8.00" fill="#4f9664" />
<rect x="52.13" y="582.47" width="11.97" height="8.00" fill="#b9505a" />
<text transform="matrix(1,0,0,0.78,38,589.47)" font-size="9" fill="#eef0f0" letter-spacing="0.8">315; 263</text>
<rect x="37.80" y="591.77" width="23.34" height="8.00" fill="#4f9664" />
<rect x="61.14" y="591.77" width="19.38" height="8.00" fill="#b9505a" />
<text transform="matrix(1,0,0,0.78,38,598.77)" font-size="9" fill="#eef0f0" letter-spacing="0.8">513; 426</text>
<rect x="37.80" y="601.07" width="23.71" height="8.00" fill="#4f9664" />
<rect x="61.51" y="601.07" width="19.38" height="8.00" fill="#b9505a" />
<text transform="matrix(1,0,0,0.78,38,608.07)" font-size="9" fill="#eef0f0" letter-spacing="0.8">521; 426</text>
<rect x="37.80" y="610.37" width="32.17" height="8.00" fill="#4f9664" />
<rect x="69.97" y="610.37" width="26.30" height="8.00" fill="#b9505a" />
<text transform="matrix(1,0,0,0.78,38,617.37)" font-size="9" fill="#eef0f0" letter-spacing="0.8">707; 578</text>
<rect x="37.80" y="619.68" width="25.12" height="8.00" fill="#4f9664" />
<rect x="62.92" y="619.68" width="30.26" height="8.00" fill="#b9505a" />
<text transform="matrix(1,0,0,0.78,38,626.68)" font-size="9" fill="#eef0f0" letter-spacing="0.8">552; 665</text>
<rect x="37.80" y="628.98" width="28.39" height="8.00" fill="#4f9664" />
<rect x="66.19" y="628.98" width="37.13" height="8.00" fill="#b9505a" />
<text transform="matrix(1,0,0,0.78,38,635.98)" font-size="9" fill="#eef0f0" letter-spacing="0.8">624; 816</text>
<rect x="37.80" y="638.28" width="20.34" height="8.00" fill="#4f9664" />
<rect x="58.14" y="638.28" width="21.84" height="8.00" fill="#b9505a" />
<text transform="matrix(1,0,0,0.78,38,645.28)" font-size="9" fill="#eef0f0" letter-spacing="0.8">447; 480</text>
<rect x="37.80" y="647.59" width="20.02" height="8.00" fill="#4f9664" />
<rect x="57.82" y="647.59" width="23.16" height="8.00" fill="#b9505a" />
<text transform="matrix(1,0,0,0.78,38,654.59)" font-size="9" fill="#eef0f0" letter-spacing="0.8">440; 509</text>
<rect x="37.80" y="656.89" width="15.29" height="8.00" fill="#4f9664" />
<rect x="53.09" y="656.89" width="13.65" height="8.00" fill="#b9505a" />
<text transform="matrix(1,0,0,0.78,38,663.89)" font-size="9" fill="#eef0f0" letter-spacing="0.8">336; 300</text>
<rect x="37.80" y="666.19" width="7.69" height="8.00" fill="#4f9664" />
<rect x="45.49" y="666.19" width="5.96" height="8.00" fill="#b9505a" />
<text transform="matrix(1,0,0,0.78,38,673.19)" font-size="9" fill="#eef0f0" letter-spacing="0.8">169; 131</text>
<rect x="37.80" y="675.50" width="2.78" height="8.00" fill="#4f9664" />
<rect x="40.58" y="675.50" width="3.37" height="8.00" fill="#b9505a" />
<text transform="matrix(1,0,0,0.78,38,682.50)" font-size="9" fill="#eef0f0" letter-spacing="0.8">61; 74</text>
<rect x="37.80" y="684.80" width="5.28" height="8.00" fill="#4f9664" />
<rect x="43.08" y="684.80" width="3.87" height="8.00" fill="#b9505a" />
<text transform="matrix(1,0,0,0.78,38,691.80)" font-size="9" fill="#eef0f0" letter-spacing="0.8">116; 85</text>
<rect x="37.80" y="694.10" width="2.41" height="8.00" fill="#4f9664" />
<rect x="40.21" y="694.10" width="2.00" height="8.00" fill="#b9505a" />
<text transform="matrix(1,0,0,0.78,38,701.10)" font-size="9" fill="#eef0f0" letter-spacing="0.8">53; 44</text>
<rect x="37.80" y="703.40" width="4.32" height="8.00" fill="#4f9664" />
<rect x="42.12" y="703.40" width="3.09" height="8.00" fill="#b9505a" />
<text transform="matrix(1,0,0,0.78,38,710.40)" font-size="9" fill="#eef0f0" letter-spacing="0.8">95; 68</text>
</g>
<line x1="133.50" y1="72.00" x2="133.50" y2="712.00" stroke="#cfd2d6" stroke-width="1" />
<line x1="1508.50" y1="72.00" x2="1508.50" y2="712.00" stroke="#cfd2d6" stroke-width="1" />
<line x1="34.30" y1="72.00" x2="34.30" y2="711.00" stroke="#cfd2d6" stroke-width="1" />
<line x1="0.00" y1="711.00" x2="34.30" y2="711.00" stroke="#cfd2d6" stroke-width="1" />
<text x="1510.00" y="80.00" font-size="10.8" fill="#f0f0f0" text-anchor="start" >94 250</text>
<text x="1510.00" y="107.91" font-size="10.8" fill="#f0f0f0" text-anchor="start" >94 100</text>
<text x="1510.00" y="135.82" font-size="10.8" fill="#f0f0f0" text-anchor="start" >93 950</text>
<text x="1510.00" y="163.73" font-size="10.8" fill="#f0f0f0" text-anchor="start" >93 800</text>
<text x="1510.00" y="191.64" font-size="10.8" fill="#f0f0f0" text-anchor="start" >93 650</text>
<text x="1510.00" y="219.55" font-size="10.8" fill="#f0f0f0" text-anchor="start" >93 500</text>
<text x="1510.00" y="247.45" font-size="10.8" fill="#f0f0f0" text-anchor="start" >93 350</text>
<text x="1510.00" y="275.36" font-size="10.8" fill="#f0f0f0" text-anchor="start" >93 200</text>
<text x="1510.00" y="303.27" font-size="10.8" fill="#f0f0f0" text-anchor="start" >93 050</text>
<text x="1510.00" y="331.18" font-size="10.8" fill="#f0f0f0" text-anchor="start" >92 900</text>
<text x="1510.00" y="359.09" font-size="10.8" fill="#f0f0f0" text-anchor="start" >92 750</text>
<text x="1510.00" y="387.00" font-size="10.8" fill="#f0f0f0" text-anchor="start" >92 600</text>
<text x="1510.00" y="414.91" font-size="10.8" fill="#f0f0f0" text-anchor="start" >92 450</text>
<text x="1510.00" y="442.82" font-size="10.8" fill="#f0f0f0" text-anchor="start" >92 300</text>
<text x="1510.00" y="470.73" font-size="10.8" fill="#f0f0f0" text-anchor="start" >92 150</text>
<text x="1510.00" y="498.63" font-size="10.8" fill="#f0f0f0" text-anchor="start" >92 000</text>
<text x="1510.00" y="526.54" font-size="10.8" fill="#f0f0f0" text-anchor="start" >91 850</text>
<text x="1510.00" y="554.45" font-size="10.8" fill="#f0f0f0" text-anchor="start" >91 700</text>
<text x="1510.00" y="582.36" font-size="10.8" fill="#f0f0f0" text-anchor="start" >91 550</text>
<text x="1510.00" y="610.27" font-size="10.8" fill="#f0f0f0" text-anchor="start" >91 400</text>
<text x="1510.00" y="638.18" font-size="10.8" fill="#f0f0f0" text-anchor="start" >91 250</text>
<text x="1510.00" y="666.09" font-size="10.8" fill="#f0f0f0" text-anchor="start" >91 100</text>
<text x="1510.00" y="694.00" font-size="10.8" fill="#f0f0f0" text-anchor="start" >90 950</text>
<rect x="1508.50" y="359.70" width="50.00" height="18.80" fill="#d63a3f" />
<text x="1510.00" y="374.00" font-size="13" fill="#ffffff" text-anchor="start" >92696</text>
<rect x="1508.50" y="429.60" width="50.00" height="39.10" fill="#787a7c" />
<text x="1509.50" y="442.00" font-size="12.5" fill="#ffffff" text-anchor="start" >92321</text>
<text x="1509.50" y="455.00" font-size="12.5" fill="#ffffff" text-anchor="start" >-0.40%</text>
<text x="1509.50" y="468.00" font-size="12.5" fill="#ffffff" text-anchor="start" >4.0k bids</text>
<line x1="133.50" y1="718.50" x2="1557.50" y2="718.50" stroke="#d6d6d6" stroke-width="1.5" />
<line x1="133.50" y1="769.30" x2="1508.50" y2="769.30" stroke="#d6d6d6" stroke-width="1.5" />
<line x1="1508.50" y1="767.50" x2="1557.50" y2="767.50" stroke="#d6d6d6" stroke-width="1.3" />
<line x1="0.00" y1="768.30" x2="133.50" y2="768.30" stroke="#d6d6d6" stroke-width="1.5" />
<line x1="1557.50" y1="718.50" x2="1557.50" y2="767.50" stroke="#d6d6d6" stroke-width="1.2" />
<line x1="142.50" y1="719.50" x2="142.50" y2="768.50" stroke="#33373d" stroke-width="1" />
<line x1="175.50" y1="719.50" x2="175.50" y2="768.50" stroke="#33373d" stroke-width="1" />
<line x1="308.50" y1="719.50" x2="308.50" y2="768.50" stroke="#33373d" stroke-width="1" />
<line x1="441.50" y1="719.50" x2="441.50" y2="768.50" stroke="#33373d" stroke-width="1" />
<line x1="575.50" y1="719.50" x2="575.50" y2="768.50" stroke="#33373d" stroke-width="1" />
<line x1="708.50" y1="719.50" x2="708.50" y2="768.50" stroke="#33373d" stroke-width="1" />
<line x1="841.50" y1="719.50" x2="841.50" y2="768.50" stroke="#33373d" stroke-width="1" />
<line x1="974.50" y1="719.50" x2="974.50" y2="768.50" stroke="#33373d" stroke-width="1" />
<line x1="1108.50" y1="719.50" x2="1108.50" y2="768.50" stroke="#33373d" stroke-width="1" />
<line x1="1241.50" y1="719.50" x2="1241.50" y2="768.50" stroke="#33373d" stroke-width="1" />
<line x1="1374.50" y1="719.50" x2="1374.50" y2="768.50" stroke="#33373d" stroke-width="1" />
<line x1="1508.50" y1="718.50" x2="1508.50" y2="828.50" stroke="#d6d6d6" stroke-width="1.2" />
<rect x="134.00" y="762.35" width="40.31" height="2.80" fill="#b84d52" />
<rect x="134.00" y="765.15" width="40.31" height="3.35" fill="#4f8f5f" />
<text x="131.30" y="733.50" font-size="11" fill="#27c427" text-anchor="start" textLength="8.7" lengthAdjust="spacingAndGlyphs">29</text>
<text x="131.30" y="749.00" font-size="11" fill="#eeeeee" text-anchor="start" textLength="13.0" lengthAdjust="spacingAndGlyphs">329</text>
<text x="131.30" y="763.00" font-size="11" fill="#f2a0a0" text-anchor="start" textLength="13.0" lengthAdjust="spacingAndGlyphs">150</text>
<rect x="175.51" y="759.98" width="43.21" height="2.64" fill="#b84d52" />
<rect x="175.51" y="762.61" width="43.21" height="5.89" fill="#4f8f5f" />
<text x="175.71" y="733.50" font-size="11" fill="#27c427" text-anchor="start" textLength="13.0" lengthAdjust="spacingAndGlyphs">174</text>
<text x="175.71" y="749.00" font-size="11" fill="#eeeeee" text-anchor="start" textLength="13.0" lengthAdjust="spacingAndGlyphs">456</text>
<text x="175.71" y="763.00" font-size="11" fill="#f2a0a0" text-anchor="start" textLength="13.0" lengthAdjust="spacingAndGlyphs">141</text>
<rect x="219.91" y="765.29" width="43.21" height="1.53" fill="#b84d52" />
<rect x="219.91" y="766.82" width="43.21" height="1.68" fill="#4f8f5f" />
<text x="220.11" y="733.50" font-size="11" fill="#27c427" text-anchor="start" textLength="4.3" lengthAdjust="spacingAndGlyphs">8</text>
<text x="220.11" y="749.00" font-size="11" fill="#eeeeee" text-anchor="start" textLength="13.0" lengthAdjust="spacingAndGlyphs">172</text>
<text x="220.11" y="763.00" font-size="11" fill="#f2a0a0" text-anchor="start" textLength="8.7" lengthAdjust="spacingAndGlyphs">82</text>
<rect x="264.32" y="754.54" width="43.21" height="7.21" fill="#b84d52" />
<rect x="264.32" y="761.75" width="43.21" height="6.75" fill="#4f8f5f" />
<text x="264.52" y="733.50" font-size="11" fill="#ea8a86" text-anchor="start" textLength="11.3" lengthAdjust="spacingAndGlyphs">-25</text>
<text x="264.52" y="749.00" font-size="11" fill="#eeeeee" text-anchor="start" textLength="13.0" lengthAdjust="spacingAndGlyphs">747</text>
<text x="264.52" y="763.00" font-size="11" fill="#f2a0a0" text-anchor="start" textLength="13.0" lengthAdjust="spacingAndGlyphs">386</text>
<rect x="308.73" y="759.94" width="43.21" height="4.54" fill="#b84d52" />
<rect x="308.73" y="764.48" width="43.21" height="4.02" fill="#4f8f5f" />
<text x="308.93" y="733.50" font-size="11" fill="#ea8a86" text-anchor="start" textLength="11.3" lengthAdjust="spacingAndGlyphs">-28</text>
<text x="308.93" y="749.00" font-size="11" fill="#eeeeee" text-anchor="start" textLength="13.0" lengthAdjust="spacingAndGlyphs">458</text>
<text x="308.93" y="763.00" font-size="11" fill="#f2a0a0" text-anchor="start" textLength="13.0" lengthAdjust="spacingAndGlyphs">243</text>
<rect x="353.13" y="756.99" width="43.21" height="6.99" fill="#b84d52" />
<rect x="353.13" y="763.98" width="43.21" height="4.52" fill="#4f8f5f" />
<text x="353.33" y="733.50" font-size="11" fill="#ea8a86" text-anchor="start" textLength="15.6" lengthAdjust="spacingAndGlyphs">-132</text>
<text x="353.33" y="749.00" font-size="11" fill="#eeeeee" text-anchor="start" textLength="13.0" lengthAdjust="spacingAndGlyphs">616</text>
<text x="353.33" y="763.00" font-size="11" fill="#f2a0a0" text-anchor="start" textLength="13.0" lengthAdjust="spacingAndGlyphs">374</text>
<rect x="397.54" y="750.91" width="43.21" height="8.13" fill="#b84d52" />
<rect x="397.54" y="759.04" width="43.21" height="9.46" fill="#4f8f5f" />
<text x="397.74" y="733.50" font-size="11" fill="#27c427" text-anchor="start" textLength="8.7" lengthAdjust="spacingAndGlyphs">71</text>
<text x="397.74" y="749.00" font-size="11" fill="#eeeeee" text-anchor="start" textLength="13.0" lengthAdjust="spacingAndGlyphs">941</text>
<text x="397.74" y="763.00" font-size="11" fill="#f2a0a0" text-anchor="start" textLength="13.0" lengthAdjust="spacingAndGlyphs">435</text>
<rect x="441.95" y="756.03" width="43.21" height="5.57" fill="#b84d52" />
<rect x="441.95" y="761.60" width="43.21" height="6.90" fill="#4f8f5f" />
<text x="442.15" y="733.50" font-size="11" fill="#27c427" text-anchor="start" textLength="8.7" lengthAdjust="spacingAndGlyphs">71</text>
<text x="442.15" y="749.00" font-size="11" fill="#eeeeee" text-anchor="start" textLength="13.0" lengthAdjust="spacingAndGlyphs">667</text>
<text x="442.15" y="763.00" font-size="11" fill="#f2a0a0" text-anchor="start" textLength="13.0" lengthAdjust="spacingAndGlyphs">298</text>
<rect x="486.36" y="761.60" width="43.21" height="4.92" fill="#b84d52" />
<rect x="486.36" y="766.52" width="43.21" height="1.98" fill="#4f8f5f" />
<text x="486.56" y="733.50" font-size="11" fill="#ea8a86" text-anchor="start" textLength="15.6" lengthAdjust="spacingAndGlyphs">-157</text>
<text x="486.56" y="749.00" font-size="11" fill="#eeeeee" text-anchor="start" textLength="13.0" lengthAdjust="spacingAndGlyphs">369</text>
<text x="486.56" y="763.00" font-size="11" fill="#f2a0a0" text-anchor="start" textLength="13.0" lengthAdjust="spacingAndGlyphs">263</text>
<rect x="530.76" y="760.01" width="43.21" height="4.39" fill="#b84d52" />
<rect x="530.76" y="764.41" width="43.21" height="4.09" fill="#4f8f5f" />
<text x="530.96" y="733.50" font-size="11" fill="#ea8a86" text-anchor="start" textLength="11.3" lengthAdjust="spacingAndGlyphs">-16</text>
<text x="530.96" y="749.00" font-size="11" fill="#eeeeee" text-anchor="start" textLength="13.0" lengthAdjust="spacingAndGlyphs">454</text>
<text x="530.96" y="763.00" font-size="11" fill="#f2a0a0" text-anchor="start" textLength="13.0" lengthAdjust="spacingAndGlyphs">235</text>
<rect x="575.17" y="763.42" width="43.21" height="2.02" fill="#b84d52" />
<rect x="575.17" y="765.43" width="43.21" height="3.07" fill="#4f8f5f" />
<text x="575.37" y="733.50" font-size="11" fill="#27c427" text-anchor="start" textLength="8.7" lengthAdjust="spacingAndGlyphs">56</text>
<text x="575.37" y="749.00" font-size="11" fill="#eeeeee" text-anchor="start" textLength="13.0" lengthAdjust="spacingAndGlyphs">272</text>
<text x="575.37" y="763.00" font-size="11" fill="#f2a0a0" text-anchor="start" textLength="13.0" lengthAdjust="spacingAndGlyphs">108</text>
<rect x="619.58" y="763.43" width="43.21" height="2.54" fill="#b84d52" />
<rect x="619.58" y="765.98" width="43.21" height="2.52" fill="#4f8f5f" />
<text x="619.78" y="733.50" font-size="11" fill="#ea8a86" text-anchor="start" textLength="6.9" lengthAdjust="spacingAndGlyphs">-1</text>
<text x="619.78" y="749.00" font-size="11" fill="#eeeeee" text-anchor="start" textLength="13.0" lengthAdjust="spacingAndGlyphs">271</text>
<text x="619.78" y="763.00" font-size="11" fill="#f2a0a0" text-anchor="start" textLength="13.0" lengthAdjust="spacingAndGlyphs">136</text>
<rect x="663.98" y="762.57" width="43.21" height="3.08" fill="#b84d52" />
<rect x="663.98" y="765.66" width="43.21" height="2.84" fill="#4f8f5f" />
<text x="664.18" y="733.50" font-size="11" fill="#ea8a86" text-anchor="start" textLength="11.3" lengthAdjust="spacingAndGlyphs">-13</text>
<text x="664.18" y="749.00" font-size="11" fill="#eeeeee" text-anchor="start" textLength="13.0" lengthAdjust="spacingAndGlyphs">317</text>
<text x="664.18" y="763.00" font-size="11" fill="#f2a0a0" text-anchor="start" textLength="13.0" lengthAdjust="spacingAndGlyphs">165</text>
<rect x="708.39" y="762.44" width="43.21" height="3.33" fill="#b84d52" />
<rect x="708.39" y="765.77" width="43.21" height="2.73" fill="#4f8f5f" />
<text x="708.59" y="733.50" font-size="11" fill="#ea8a86" text-anchor="start" textLength="11.3" lengthAdjust="spacingAndGlyphs">-32</text>
<text x="708.59" y="749.00" font-size="11" fill="#eeeeee" text-anchor="start" textLength="13.0" lengthAdjust="spacingAndGlyphs">324</text>
<text x="708.59" y="763.00" font-size="11" fill="#f2a0a0" text-anchor="start" textLength="13.0" lengthAdjust="spacingAndGlyphs">178</text>
<rect x="752.80" y="765.98" width="43.21" height="1.08" fill="#b84d52" />
<rect x="752.80" y="767.06" width="43.21" height="1.44" fill="#4f8f5f" />
<text x="753.00" y="733.50" font-size="11" fill="#27c427" text-anchor="start" textLength="8.7" lengthAdjust="spacingAndGlyphs">19</text>
<text x="753.00" y="749.00" font-size="11" fill="#eeeeee" text-anchor="start" textLength="13.0" lengthAdjust="spacingAndGlyphs">135</text>
<text x="753.00" y="763.00" font-size="11" fill="#f2a0a0" text-anchor="start" textLength="8.7" lengthAdjust="spacingAndGlyphs">58</text>
<rect x="797.20" y="762.80" width="43.21" height="3.14" fill="#b84d52" />
<rect x="797.20" y="765.94" width="43.21" height="2.56" fill="#4f8f5f" />
<text x="797.40" y="733.50" font-size="11" fill="#ea8a86" text-anchor="start" textLength="11.3" lengthAdjust="spacingAndGlyphs">-31</text>
<text x="797.40" y="749.00" font-size="11" fill="#eeeeee" text-anchor="start" textLength="13.0" lengthAdjust="spacingAndGlyphs">305</text>
<text x="797.40" y="763.00" font-size="11" fill="#f2a0a0" text-anchor="start" textLength="13.0" lengthAdjust="spacingAndGlyphs">168</text>
<rect x="841.61" y="761.57" width="43.21" height="3.64" fill="#b84d52" />
<rect x="841.61" y="765.21" width="43.21" height="3.29" fill="#4f8f5f" />
<text x="841.81" y="733.50" font-size="11" fill="#ea8a86" text-anchor="start" textLength="11.3" lengthAdjust="spacingAndGlyphs">-19</text>
<text x="841.81" y="749.00" font-size="11" fill="#eeeeee" text-anchor="start" textLength="13.0" lengthAdjust="spacingAndGlyphs">371</text>
<text x="841.81" y="763.00" font-size="11" fill="#f2a0a0" text-anchor="start" textLength="13.0" lengthAdjust="spacingAndGlyphs">195</text>
<rect x="886.02" y="765.75" width="43.21" height="1.14" fill="#b84d52" />
<rect x="886.02" y="766.89" width="43.21" height="1.61" fill="#4f8f5f" />
<text x="886.22" y="733.50" font-size="11" fill="#27c427" text-anchor="start" textLength="8.7" lengthAdjust="spacingAndGlyphs">25</text>
<text x="886.22" y="749.00" font-size="11" fill="#eeeeee" text-anchor="start" textLength="13.0" lengthAdjust="spacingAndGlyphs">147</text>
<text x="886.22" y="763.00" font-size="11" fill="#f2a0a0" text-anchor="start" textLength="8.7" lengthAdjust="spacingAndGlyphs">61</text>
<rect x="930.43" y="766.00" width="43.21" height="1.05" fill="#b84d52" />
<rect x="930.43" y="767.04" width="43.21" height="1.46" fill="#4f8f5f" />
<text x="930.63" y="733.50" font-size="11" fill="#27c427" text-anchor="start" textLength="8.7" lengthAdjust="spacingAndGlyphs">22</text>
<text x="930.63" y="749.00" font-size="11" fill="#eeeeee" text-anchor="start" textLength="13.0" lengthAdjust="spacingAndGlyphs">134</text>
<text x="930.63" y="763.00" font-size="11" fill="#f2a0a0" text-anchor="start" textLength="8.7" lengthAdjust="spacingAndGlyphs">56</text>
<rect x="974.83" y="765.79" width="43.21" height="1.08" fill="#b84d52" />
<rect x="974.83" y="766.87" width="43.21" height="1.63" fill="#4f8f5f" />
<text x="975.03" y="733.50" font-size="11" fill="#27c427" text-anchor="start" textLength="8.7" lengthAdjust="spacingAndGlyphs">29</text>
<text x="975.03" y="749.00" font-size="11" fill="#eeeeee" text-anchor="start" textLength="13.0" lengthAdjust="spacingAndGlyphs">145</text>
<text x="975.03" y="763.00" font-size="11" fill="#f2a0a0" text-anchor="start" textLength="8.7" lengthAdjust="spacingAndGlyphs">58</text>
<rect x="1019.24" y="761.21" width="43.21" height="3.10" fill="#b84d52" />
<rect x="1019.24" y="764.31" width="43.21" height="4.19" fill="#4f8f5f" />
<text x="1019.44" y="733.50" font-size="11" fill="#27c427" text-anchor="start" textLength="8.7" lengthAdjust="spacingAndGlyphs">58</text>
<text x="1019.44" y="749.00" font-size="11" fill="#eeeeee" text-anchor="start" textLength="13.0" lengthAdjust="spacingAndGlyphs">390</text>
<text x="1019.44" y="763.00" font-size="11" fill="#f2a0a0" text-anchor="start" textLength="13.0" lengthAdjust="spacingAndGlyphs">166</text>
<rect x="1063.65" y="728.50" width="43.21" height="16.19" fill="#b84d52" />
<rect x="1063.65" y="744.69" width="43.21" height="23.81" fill="#4f8f5f" />
<text x="1063.85" y="733.50" font-size="11" fill="#27c427" text-anchor="start" textLength="13.0" lengthAdjust="spacingAndGlyphs">330</text>
<text x="1063.85" y="749.00" font-size="11" fill="#eeeeee" text-anchor="start" textLength="15.6" lengthAdjust="spacingAndGlyphs">2.1k</text>
<text x="1063.85" y="763.00" font-size="11" fill="#f2a0a0" text-anchor="start" textLength="13.0" lengthAdjust="spacingAndGlyphs">866</text>
<rect x="1108.05" y="728.50" width="43.21" height="15.03" fill="#b84d52" />
<rect x="1108.05" y="743.53" width="43.21" height="24.97" fill="#4f8f5f" />
<text x="1108.25" y="733.50" font-size="11" fill="#27c427" text-anchor="start" textLength="13.0" lengthAdjust="spacingAndGlyphs">371</text>
<text x="1108.25" y="749.00" font-size="11" fill="#eeeeee" text-anchor="start" textLength="8.7" lengthAdjust="spacingAndGlyphs">2k</text>
<text x="1108.25" y="763.00" font-size="11" fill="#f2a0a0" text-anchor="start" textLength="13.0" lengthAdjust="spacingAndGlyphs">804</text>
<rect x="1152.46" y="751.47" width="43.21" height="7.16" fill="#b84d52" />
<rect x="1152.46" y="758.63" width="43.21" height="9.87" fill="#4f8f5f" />
<text x="1152.66" y="733.50" font-size="11" fill="#27c427" text-anchor="start" textLength="13.0" lengthAdjust="spacingAndGlyphs">145</text>
<text x="1152.66" y="749.00" font-size="11" fill="#eeeeee" text-anchor="start" textLength="13.0" lengthAdjust="spacingAndGlyphs">911</text>
<text x="1152.66" y="763.00" font-size="11" fill="#f2a0a0" text-anchor="start" textLength="13.0" lengthAdjust="spacingAndGlyphs">383</text>
<rect x="1196.87" y="757.36" width="43.21" height="4.41" fill="#b84d52" />
<rect x="1196.87" y="761.77" width="43.21" height="6.73" fill="#4f8f5f" />
<text x="1197.07" y="733.50" font-size="11" fill="#27c427" text-anchor="start" textLength="13.0" lengthAdjust="spacingAndGlyphs">124</text>
<text x="1197.07" y="749.00" font-size="11" fill="#eeeeee" text-anchor="start" textLength="13.0" lengthAdjust="spacingAndGlyphs">596</text>
<text x="1197.07" y="763.00" font-size="11" fill="#f2a0a0" text-anchor="start" textLength="13.0" lengthAdjust="spacingAndGlyphs">236</text>
<rect x="1241.27" y="757.55" width="43.21" height="6.65" fill="#b84d52" />
<rect x="1241.27" y="764.20" width="43.21" height="4.30" fill="#4f8f5f" />
<text x="1241.47" y="733.50" font-size="11" fill="#ea8a86" text-anchor="start" textLength="15.6" lengthAdjust="spacingAndGlyphs">-126</text>
<text x="1241.47" y="749.00" font-size="11" fill="#eeeeee" text-anchor="start" textLength="13.0" lengthAdjust="spacingAndGlyphs">586</text>
<text x="1241.47" y="763.00" font-size="11" fill="#f2a0a0" text-anchor="start" textLength="13.0" lengthAdjust="spacingAndGlyphs">356</text>
<text x="1285.88" y="733.50" font-size="11" fill="#27c427" text-anchor="start" textLength="8.7" lengthAdjust="spacingAndGlyphs">34</text>
<text x="1285.88" y="749.00" font-size="11" fill="#eeeeee" text-anchor="start" textLength="8.7" lengthAdjust="spacingAndGlyphs">80</text>
<text x="1285.88" y="763.00" font-size="11" fill="#f2a0a0" text-anchor="start" textLength="8.7" lengthAdjust="spacingAndGlyphs">22</text>
<rect x="132.50" y="720.00" width="1.50" height="48.00" fill="#1f2329" />
<text x="1510.00" y="730.00" font-size="10.8" fill="#f0f0f0" text-anchor="start" >2.2k</text>
<text x="1510.00" y="745.00" font-size="10.8" fill="#f0f0f0" text-anchor="start" >1.4k</text>
<text x="1510.00" y="760.00" font-size="10.8" fill="#f0f0f0" text-anchor="start" >695</text>
<line x1="133.50" y1="828.30" x2="1508.50" y2="828.30" stroke="#d6d6d6" stroke-width="1.5" />
<line x1="0.00" y1="827.80" x2="133.50" y2="827.80" stroke="#d6d6d6" stroke-width="1.5" />
<line x1="1557.50" y1="769.60" x2="1557.50" y2="826.30" stroke="#d6d6d6" stroke-width="1.2" />
<line x1="1508.50" y1="826.30" x2="1557.50" y2="826.30" stroke="#d6d6d6" stroke-width="1.2" />
<line x1="1557.50" y1="828.30" x2="1557.50" y2="852.00" stroke="#d6d6d6" stroke-width="1.2" />
<line x1="142.50" y1="770.30" x2="142.50" y2="827.30" stroke="#33373d" stroke-width="1" />
<line x1="175.50" y1="770.30" x2="175.50" y2="827.30" stroke="#33373d" stroke-width="1" />
<line x1="308.50" y1="770.30" x2="308.50" y2="827.30" stroke="#33373d" stroke-width="1" />
<line x1="441.50" y1="770.30" x2="441.50" y2="827.30" stroke="#33373d" stroke-width="1" />
<line x1="575.50" y1="770.30" x2="575.50" y2="827.30" stroke="#33373d" stroke-width="1" />
<line x1="708.50" y1="770.30" x2="708.50" y2="827.30" stroke="#33373d" stroke-width="1" />
<line x1="841.50" y1="770.30" x2="841.50" y2="827.30" stroke="#33373d" stroke-width="1" />
<line x1="974.50" y1="770.30" x2="974.50" y2="827.30" stroke="#33373d" stroke-width="1" />
<line x1="1108.50" y1="770.30" x2="1108.50" y2="827.30" stroke="#33373d" stroke-width="1" />
<line x1="1241.50" y1="770.30" x2="1241.50" y2="827.30" stroke="#33373d" stroke-width="1" />
<line x1="1374.50" y1="770.30" x2="1374.50" y2="827.30" stroke="#33373d" stroke-width="1" />
<clipPath id="ab"><rect x="133.5" y="770.0999999999999" width="1375.0" height="57.4"/></clipPath>
<g clip-path="url(#ab)">
<line x1="136.50" y1="811.60" x2="1508.50" y2="811.60" stroke="#9a2a2c" stroke-width="2.4" stroke-dasharray="5,5"/>
<polyline points="131.1,794.9 142.2,807.7 153.3,798.8 164.4,798.8 175.5,798.3 186.6,791.6 197.7,798.3 208.9,799.3 220.0,794.2 231.1,798.3 242.2,797.5 253.3,801.8 264.4,793.6 275.5,796.2 286.6,801.3 297.7,803.9 308.8,795.7 319.9,805.2 331.0,804.7 342.1,798.8 353.2,800.1 364.4,809.0 375.5,805.9 386.6,800.8 397.7,802.6 408.8,797.5 419.9,798.8 431.0,797.5 442.1,800.1 453.2,802.6 464.3,801.3 475.4,800.8 486.5,798.3 497.6,799.3 508.8,797.5 519.9,796.7 531.0,805.2 542.1,794.9 553.2,791.1 564.3,799.3 575.4,800.1 586.5,809.0 597.6,803.9 608.7,796.7 619.8,785.9 630.9,800.1 642.0,801.3 653.2,799.3 664.3,792.4 675.4,805.2 686.5,800.8 697.6,799.3 708.7,794.9 719.8,796.7 730.9,792.4 742.0,793.6 753.1,787.2 764.2,793.1 775.3,790.6 786.4,791.6 797.6,806.5 808.7,803.9 819.8,814.2 830.9,809.0 842.0,823.1 853.1,819.3 864.2,814.7 875.3,815.4 886.4,800.8 897.5,802.6 908.6,797.5 919.7,801.3 930.8,784.7 941.9,792.4 953.1,806.5 964.2,809.0 975.3,809.0 986.4,801.3 997.5,806.5 1008.6,802.6 1019.7,797.5 1030.8,796.7 1041.9,793.6 1053.0,794.9 1064.1,790.5 1075.2,805.0 1086.3,799.7 1097.5,773.8 1108.6,772.7 1119.7,775.5 1130.8,767.2 1141.9,770.5 1153.0,787.2 1164.1,792.2 1175.2,798.3 1186.3,793.0 1197.4,785.5 1208.5,778.0 1219.6,777.7 1230.7,789.7 1241.8,791.7 1253.0,788.8 1264.1,799.7 1275.2,797.7 1286.3,806.7 1297.4,802.2" fill="none" stroke="#e66b6b" stroke-width="2.1" stroke-linejoin="round"/>
<polyline points="131.1,800.8 142.2,805.9 153.3,799.3 164.4,799.3 175.5,803.4 186.6,796.7 197.7,798.3 208.9,801.8 220.0,798.3 231.1,800.8 242.2,801.8 253.3,802.6 264.4,791.8 275.5,795.7 286.6,805.2 297.7,805.2 308.8,800.1 319.9,809.5 331.0,803.9 342.1,800.1 353.2,805.2 364.4,809.0 375.5,810.3 386.6,802.6 397.7,805.2 408.8,800.8 419.9,799.3 431.0,795.7 442.1,796.7 453.2,799.3 464.3,796.2 475.4,794.2 486.5,802.6 497.6,802.6 508.8,801.8 519.9,801.3 531.0,802.6 542.1,797.5 553.2,795.7 564.3,801.3 575.4,801.3 586.5,807.7 597.6,805.2 608.7,801.3 619.8,792.4 630.9,800.8 642.0,800.8 653.2,802.6 664.3,798.3 675.4,805.9 686.5,802.6 697.6,805.9 708.7,800.8 719.8,802.6 730.9,800.1 742.0,802.6 753.1,797.5 764.2,800.8 775.3,797.5 786.4,798.8 797.6,806.5 808.7,802.6 819.8,812.1 830.9,805.9 842.0,815.4 853.1,812.1 864.2,809.5 875.3,810.3 886.4,803.4 897.5,806.5 908.6,801.3 919.7,805.9 930.8,789.8 941.9,800.1 953.1,803.9 964.2,806.5 975.3,807.0 986.4,805.2 997.5,804.4 1008.6,801.3 1019.7,801.3 1030.8,800.1 1041.9,797.5 1053.0,792.4 1064.1,793.3 1075.2,806.0 1086.3,801.0 1097.5,786.7 1108.6,778.8 1119.7,780.0 1130.8,775.0 1141.9,780.0 1153.0,784.7 1164.1,786.0 1175.2,796.7 1186.3,791.3 1197.4,784.7 1208.5,778.3 1219.6,778.8 1230.7,788.8 1241.8,786.7 1253.0,792.7 1264.1,802.2 1275.2,797.2 1286.3,803.8 1297.4,797.2" fill="none" stroke="#2fbf55" stroke-width="2.1" stroke-linejoin="round"/>
<polyline points="131.1,810.3 142.2,813.6 153.3,809.5 164.4,807.7 175.5,811.1 186.6,805.2 197.7,806.5 208.9,809.0 220.0,807.0 231.1,809.0 242.2,809.0 253.3,811.6 264.4,801.8 275.5,806.5 286.6,811.1 297.7,811.1 308.8,809.5 319.9,814.9 331.0,814.9 342.1,811.1 353.2,813.6 364.4,816.7 375.5,816.7 386.6,810.3 397.7,812.1 408.8,808.5 419.9,808.5 431.0,807.7 442.1,808.5 453.2,809.0 464.3,808.5 475.4,807.7 486.5,807.7 497.6,805.9 508.8,808.5 519.9,807.7 531.0,809.0 542.1,807.0 553.2,802.6 564.3,806.5 575.4,807.0 586.5,812.9 597.6,809.5 608.7,807.0 619.8,800.8 630.9,806.5 642.0,807.0 653.2,808.5 664.3,803.9 675.4,809.5 686.5,807.7 697.6,809.5 708.7,806.5 719.8,807.2 730.9,806.5 742.0,807.0 753.1,803.4 764.2,805.2 775.3,802.6 786.4,805.2 797.6,808.5 808.7,807.7 819.8,814.2 830.9,809.0 842.0,818.0 853.1,815.4 864.2,812.9 875.3,812.9 886.4,809.5 897.5,810.3 908.6,807.7 919.7,810.3 930.8,796.7 941.9,805.2 953.1,809.0 964.2,814.2 975.3,810.3 986.4,809.5 997.5,807.7 1008.6,807.0 1019.7,805.9 1030.8,805.2 1041.9,805.2 1053.0,800.8 1064.1,801.0 1075.2,812.2 1086.3,808.3 1097.5,795.5 1108.6,782.2 1119.7,783.8 1130.8,780.5 1141.9,782.7 1153.0,789.3 1164.1,790.5 1175.2,797.2 1186.3,793.3 1197.4,788.8 1208.5,784.7 1219.6,784.3 1230.7,791.7 1241.8,787.7 1253.0,791.3 1264.1,803.3 1275.2,794.3 1286.3,798.8 1297.4,793.8" fill="none" stroke="#2f7fd6" stroke-width="2.1" stroke-linejoin="round"/>
</g>
<rect x="1509.50" y="786.00" width="44.50" height="14.00" fill="#2b7ad8" />
<text x="1510.00" y="797.50" font-size="11.2" fill="#ffffff" text-anchor="start" >1.088</text>
<rect x="1509.50" y="801.00" width="44.50" height="14.00" fill="#22b650" />
<text x="1510.00" y="812.50" font-size="11.2" fill="#ffffff" text-anchor="start" >1.075</text>
<rect x="1509.50" y="816.00" width="44.50" height="10.00" fill="#e86a6a" />
<clipPath id="l47"><rect x="1508" y="815" width="50" height="10.8"/></clipPath>
<text x="1510.00" y="827.50" font-size="11.2" fill="#ffffff" text-anchor="start" clip-path="url(#l47)">1.047</text>
<line x1="0.00" y1="852.50" x2="1557.50" y2="852.50" stroke="#c8cbcf" stroke-width="1.1" />
<rect x="133.50" y="829.50" width="77.50" height="19.50" fill="#6a6b6d" />
<text x="134.00" y="844.00" font-size="12.5" fill="#ffffff" text-anchor="start" >26 07:00:00</text>
<text x="375.00" y="844.00" font-size="11" fill="#e8e8e8" text-anchor="middle" >04/ 12:00</text>
<text x="641.00" y="844.00" font-size="11" fill="#e8e8e8" text-anchor="middle" >04/ 18:00</text>
<text x="908.00" y="844.00" font-size="11" fill="#e8e8e8" text-anchor="middle" >05/ 00:00</text>
<text x="1174.00" y="844.00" font-size="11" fill="#e8e8e8" text-anchor="middle" >05/ 06:00</text>
<text x="1441.00" y="844.00" font-size="11" fill="#e8e8e8" text-anchor="middle" >05/ 12:00</text>
</svg>
<svg style="position:absolute;left:25px;top:14.5px" width="12" height="12" viewBox="2.6 2.6 18.8 18.8"><path fill="#e8e8e8" d="M12 8.5a3.5 3.5 0 1 0 0 7a3.5 3.5 0 0 0 0-7zm9.4 5.1l-2.1.4a7.6 7.6 0 0 1-.8 1.9l1.2 1.8-1.8 1.8-1.8-1.2a7.6 7.6 0 0 1-1.9.8l-.4 2.1h-2.6l-.4-2.1a7.6 7.6 0 0 1-1.9-.8l-1.8 1.2-1.8-1.8 1.2-1.8a7.6 7.6 0 0 1-.8-1.9l-2.1-.4v-2.6l2.1-.4a7.6 7.6 0 0 1 .8-1.9L4.4 6.6l1.8-1.8 1.8 1.2a7.6 7.6 0 0 1 1.9-.8l.4-2.1h2.6l.4 2.1a7.6 7.6 0 0 1 1.9.8l1.8-1.2 1.8 1.8-1.2 1.8a7.6 7.6 0 0 1 .8 1.9l2.1.4z"/></svg><div class="t" style="left:40px;top:13.3px;font-size:13px;color:#e4e6e8;">Templates</div><div class="q" style="left:102.5px;top:12px;width:9.5px;height:9.5px;font-size:7.5px;line-height:9.5px;">?</div><div style="position:absolute;left:37px;top:37px;width:11px;height:11px;border-radius:50%;background:#2db84d"></div><div class="t" style="left:37px;top:35.5px;width:11px;text-align:center;font-size:12px;font-weight:bold;color:#1f2329;line-height:13px">+</div><div class="sel" style="left:51px;top:32px;width:47px;height:23px;"><span style="position:absolute;left:4px;top:0;line-height:23px;font-size:10.3px">select</span><svg style="position:absolute;right:3.5px;top:8.5px" width="9" height="7" viewBox="0 0 9 7"><path d="M1 1.5 L4.5 5 L8 1.5" stroke="#e8e8e8" stroke-width="1.8" fill="none"/></svg></div><div class="sep" style="left:137.5px"></div><div class="t" style="left:174px;top:13.3px;font-size:12.7px;color:#e4e6e8;">Indicators</div><div class="q" style="left:236px;top:12px;width:9.5px;height:9.5px;font-size:7.5px;line-height:9.5px;">?</div><svg style="position:absolute;left:169px;top:35px" width="23" height="23" viewBox="0 0 23 23"><path d="M1 11 L11.5 2 L22 11" stroke="#e8e8e8" stroke-width="1.3" fill="none"/><rect x="1.5" y="13.5" width="5" height="8.5" stroke="#e8e8e8" stroke-width="1.3" fill="none"/><rect x="6.5" y="9.5" width="5" height="12.5" stroke="#e8e8e8" stroke-width="1.3" fill="none"/><rect x="11.5" y="5" width="5" height="17" stroke="#e8e8e8" stroke-width="1.3" fill="none"/><rect x="16.5" y="10" width="5" height="12" stroke="#e8e8e8" stroke-width="1.3" fill="none"/></svg><div class="sel" style="left:199px;top:32px;width:47px;height:23px;"><span style="position:absolute;left:4px;top:0;line-height:23px;font-size:10.3px">select</span><svg style="position:absolute;right:3.5px;top:8.5px" width="9" height="7" viewBox="0 0 9 7"><path d="M1 1.5 L4.5 5 L8 1.5" stroke="#e8e8e8" stroke-width="1.8" fill="none"/></svg></div><div class="sep" style="left:278.5px"></div><div class="cb" style="left:339px;top:14px;width:13px;height:13px"><svg width="13" height="13" viewBox="0 0 13 13"><path d="M3 6.8 L5.4 9 L10 4.2" stroke="#fff" stroke-width="2.2" fill="none" stroke-linecap="round" stroke-linejoin="round"/></svg></div><div class="t" style="left:361px;top:13.5px;font-size:13.1px;color:#e4e6e8;">Skip confirmations: currencies+exchanges</div><div class="q" style="left:611.5px;top:12px;width:9px;height:9px;font-size:7px;line-height:9px;">?</div><div class="sel" style="left:341px;top:32px;width:108px;height:23px;"><span style="position:absolute;left:0px;top:0;line-height:23px;font-size:11px"></span></div><svg style="position:absolute;left:360px;top:39px" width="11" height="11" viewBox="0 0 24 24"><path fill="#f5c232" d="M12 1.5l3.1 6.9 7.4.7-5.6 5 1.7 7.4L12 17.6 5.4 21.5l1.7-7.4-5.6-5 7.4-.7z"/></svg><div class="t" style="left:375.5px;top:37.5px;font-size:11.5px;color:#e4e6e8;transform:scaleX(0.81);transform-origin:0 0;">BTC-USDT</div><svg style="position:absolute;left:436px;top:42px" width="8" height="6" viewBox="0 0 8 6"><path d="M0 0 L8 0 L4 5z" fill="#8d8f92"/></svg><svg style="position:absolute;left:453px;top:35px" width="17" height="16" viewBox="0 0 24 24"><path fill="#e4e4e4" d="M12 1.5l3.1 6.9 7.4.7-5.6 5 1.7 7.4L12 17.6 5.4 21.5l1.7-7.4-5.6-5 7.4-.7z"/></svg><div class="sel" style="left:472px;top:32px;width:118px;height:23px;"><span style="position:absolute;left:5px;top:0;line-height:23px;font-size:11.2px"><span style="display:inline-block;transform:scaleX(0.92);transform-origin:0 0">Binance</span></span><svg style="position:absolute;right:3.5px;top:8.5px" width="9" height="7" viewBox="0 0 9 7"><path d="M1 1.5 L4.5 5 L8 1.5" stroke="#e8e8e8" stroke-width="1.8" fill="none"/></svg></div><div class="sel" style="left:596px;top:32px;width:41px;height:23px;"><span style="position:absolute;left:6px;top:0;line-height:23px;font-size:11px">1h</span><svg style="position:absolute;right:3.5px;top:8.5px" width="9" height="7" viewBox="0 0 9 7"><path d="M1 1.5 L4.5 5 L8 1.5" stroke="#e8e8e8" stroke-width="1.8" fill="none"/></svg></div><div class="sep" style="left:699.5px"></div><div class="cb" style="left:838px;top:17px;width:13px;height:13px"><svg width="13" height="13" viewBox="0 0 13 13"><path d="M3 6.8 L5.4 9 L10 4.2" stroke="#fff" stroke-width="2.2" fill="none" stroke-linecap="round" stroke-linejoin="round"/></svg></div><div class="t" style="left:860px;top:16.3px;font-size:12.4px;color:#e4e6e8;">Clusters</div><div class="q" style="left:911px;top:15.5px;width:8.5px;height:8.5px;font-size:6.5px;line-height:8.5px;">?</div><div class="sel" style="left:922px;top:7px;width:106px;height:25.5px;"><span style="position:absolute;left:12px;top:0;line-height:25.5px;font-size:11.4px">Candle-based</span><svg style="position:absolute;right:3.5px;top:9.75px" width="9" height="7" viewBox="0 0 9 7"><path d="M1 1.5 L4.5 5 L8 1.5" stroke="#e8e8e8" stroke-width="1.8" fill="none"/></svg></div><div class="q" style="left:1033px;top:14.5px;width:8.5px;height:8.5px;font-size:6.5px;line-height:8.5px;">?</div><div class="sel" style="left:764px;top:37px;width:68px;height:23px;"><span style="position:absolute;left:5px;top:0;line-height:23px;font-size:11px">Sum</span><svg style="position:absolute;right:3.5px;top:8.5px" width="9" height="7" viewBox="0 0 9 7"><path d="M1 1.5 L4.5 5 L8 1.5" stroke="#e8e8e8" stroke-width="1.8" fill="none"/></svg></div><div class="q" style="left:837px;top:44px;width:8.5px;height:8.5px;font-size:6.5px;line-height:8.5px;">?</div><div class="cbw" style="left:849px;top:45px;width:14.5px;height:14.5px"></div><div class="t" style="left:872px;top:42.5px;font-size:10.3px;color:#e4e6e8;">Opacity</div><div class="q" style="left:908px;top:42px;width:8.5px;height:8.5px;font-size:6.5px;line-height:8.5px;">?</div><div class="cb" style="left:920px;top:45px;width:13px;height:13px"><svg width="13" height="13" viewBox="0 0 13 13"><path d="M3 6.8 L5.4 9 L10 4.2" stroke="#fff" stroke-width="2.2" fill="none" stroke-linecap="round" stroke-linejoin="round"/></svg></div><div class="t" style="left:943px;top:42.5px;font-size:10.3px;color:#e4e6e8;">Length</div><div class="q" style="left:976px;top:42px;width:8.5px;height:8.5px;font-size:6.5px;line-height:8.5px;">?</div><div class="cb" style="left:988px;top:45px;width:13px;height:13px"><svg width="13" height="13" viewBox="0 0 13 13"><path d="M3 6.8 L5.4 9 L10 4.2" stroke="#fff" stroke-width="2.2" fill="none" stroke-linecap="round" stroke-linejoin="round"/></svg></div><div class="t" style="left:1010.5px;top:42.5px;font-size:10.5px;color:#e4e6e8;">Color by Delta</div><div class="q" style="left:1078px;top:42px;width:8.5px;height:8.5px;font-size:6.5px;line-height:8.5px;">?</div><div class="cb" style="left:1090px;top:45px;width:13px;height:13px"><svg width="13" height="13" viewBox="0 0 13 13"><path d="M3 6.8 L5.4 9 L10 4.2" stroke="#fff" stroke-width="2.2" fill="none" stroke-linecap="round" stroke-linejoin="round"/></svg></div><div class="t" style="left:1112.5px;top:42.5px;font-size:10.5px;color:#e4e6e8;">val.</div><div class="q" style="left:1129px;top:42px;width:8.5px;height:8.5px;font-size:6.5px;line-height:8.5px;">?</div><div class="sep" style="left:1198.5px"></div><div class="cb" style="left:1289px;top:14px;width:13px;height:13px"><svg width="13" height="13" viewBox="0 0 13 13"><path d="M3 6.8 L5.4 9 L10 4.2" stroke="#fff" stroke-width="2.2" fill="none" stroke-linecap="round" stroke-linejoin="round"/></svg></div><div class="t" style="left:1312px;top:13.3px;font-size:13.5px;color:#e4e6e8;">Limit order history</div><div class="q" style="left:1424px;top:13px;width:8.5px;height:8.5px;font-size:6.5px;line-height:8.5px;">?</div><div style="position:absolute;left:1253px;top:36px;width:25px;height:25px;border-radius:50%;background:linear-gradient(135deg,#fde725 0%,#b8de29 25%,#35b779 50%,#26828e 75%,#3e4a89 100%)"></div><div class="cb" style="left:1282.5px;top:43px;width:12.5px;height:12.5px"><svg width="12.5" height="12.5" viewBox="0 0 13 13"><path d="M3 6.8 L5.4 9 L10 4.2" stroke="#fff" stroke-width="2.2" fill="none" stroke-linecap="round" stroke-linejoin="round"/></svg></div><div class="t" style="left:1305px;top:41.5px;font-size:10.8px;color:#e4e6e8;">val.</div><div class="q" style="left:1323px;top:41.5px;width:8px;height:8px;font-size:6px;line-height:8px;">?</div><div class="inp" style="left:1345px;top:32px;width:85px;height:27px;border-color:#e8e8e8"><span style="position:absolute;left:11px;top:0;line-height:25px;font-size:11px">36</span></div><div class="inp" style="left:1436px;top:35px;width:41.5px;height:24px;border-color:#c9343a;border-radius:4px"><span style="position:absolute;left:12px;top:0;line-height:24px;font-size:8px;color:#d9434a">Auto</span></div><div class="q" style="left:1482px;top:41.5px;width:8.5px;height:8.5px;font-size:6.5px;line-height:8.5px;">?</div><svg style="position:absolute;left:1540px;top:17px" width="17" height="17" viewBox="0 0 17 17"><path d="M2.6 2.6 L14.4 14.4 M14.4 2.6 L2.6 14.4" stroke="#8c8f93" stroke-width="3.3" stroke-linecap="round"/></svg><div style="position:absolute;left:1558px;top:0;width:2px;height:58px;background:#1a1c20"></div><div style="position:absolute;left:1218px;top:60px;width:272px;height:9.5px;border-radius:4px 0 0 4px;box-shadow:0 -0.5px 0 0.5px rgba(215,222,230,0.55);background:linear-gradient(90deg,#414487 0%,#3e5a8e 15%,#2e6f8e 35%,#21998a 50%,#3cb865 62%,#66cc44 72%,#a9db2e 85%,#f5e52a 100%);"></div><div style="position:absolute;left:1488px;top:60px;width:69px;height:9.5px;border-radius:0 4px 4px 0;box-shadow:0 -0.5px 0 0.5px rgba(215,222,230,0.55);background:#f4e62a"></div><div style="position:absolute;left:1208px;top:57px;width:15px;height:15.5px;border-radius:3px;background:#f2f2f2"></div><div style="position:absolute;left:1478.5px;top:57px;width:15px;height:15.5px;border-radius:3px;background:#fae21a"></div>
<div class="ib" style="top:95.0px"></div><div class="ib" style="top:128.1px"></div><div class="ib" style="top:161.1px"></div><div class="ib" style="top:194.1px"></div><div class="ib" style="top:227.2px"></div><div class="ib" style="top:260.2px"></div><div class="ib" style="top:293.3px"></div><div class="ib" style="top:326.3px"></div><div class="ib" style="top:359.4px"></div><div class="ib" style="top:392.4px"></div><div class="ib" style="top:425.5px"></div><div class="ib" style="top:458.5px"></div><svg style="position:absolute;left:4.5px;top:95.0px" width="24.5" height="24.5" viewBox="0 0 24.5 24.5"><path d="M0.8 13.5 L11.8 5.8 L19.7 10.2" stroke="#dadada" fill="none" stroke-width="1.1"/><rect x="1.4" y="16.3" width="4.3" height="6.8" stroke="#dadada" fill="none" stroke-width="1.1"/><rect x="6.2" y="13.5" width="3.9" height="9.6" stroke="#dadada" fill="none" stroke-width="1.1"/><rect x="10.7" y="9.6" width="3.9" height="13.5" stroke="#dadada" fill="none" stroke-width="1.1"/><rect x="15.2" y="14.1" width="4.4" height="9" stroke="#dadada" fill="none" stroke-width="1.1"/><path d="M0.8 23.1 L23.5 23.1" stroke="#dadada" fill="none" stroke-width="1.1"/></svg><svg style="position:absolute;left:4.5px;top:128.1px" width="24.5" height="24.5" viewBox="0 0 24.5 24.5"><path d="M12.3 2.6 C12.8 2.6 13 3.3 13 3.9 C16.5 4.6 17.3 7.5 17.4 10.5 L17.6 13.5 C17.8 14.6 19.5 15.6 20.2 16.3 L4.5 16.3 C5.2 15.6 6.9 14.6 7.1 13.5 L7.3 10.5 C7.4 7.5 8.2 4.6 11.6 3.9 C11.6 3.3 11.8 2.6 12.3 2.6z" stroke="#dcdcdc" fill="none" stroke-width="1.3"/><path d="M10.6 17.4 Q12.3 20.4 14 17.4z" fill="#dcdcdc"/></svg><svg style="position:absolute;left:4.5px;top:161.1px" width="24.5" height="24.5" viewBox="0 0 24.5 24.5"><path d="M2.2 9.3 L9.6 9.3 M15.2 9.3 L21.9 9.3" stroke="#dcdcdc" stroke-width="1.2"/><circle cx="12.4" cy="9.3" r="2.7" stroke="#dcdcdc" fill="none" stroke-width="1.2"/><path d="M0.5 18.9 L24 18.9" stroke="#bdbdbd" stroke-width="0.9"/><path d="M10.6 20.4 L14.2 20.4 L12.4 22.8z" fill="#dcdcdc"/></svg><svg style="position:absolute;left:4.5px;top:194.1px" width="24.5" height="24.5" viewBox="0 0 24.5 24.5"><rect x="2.2" y="4.7" width="8.5" height="3.9" stroke="#dadada" fill="none" stroke-width="1.1"/><rect x="2.2" y="8.8" width="14.1" height="4" stroke="#dadada" fill="none" stroke-width="1.1"/><rect x="2.2" y="13.1" width="20" height="3.9" stroke="#dadada" fill="none" stroke-width="1.1"/><rect x="2.2" y="17.3" width="13.3" height="4" stroke="#dadada" fill="none" stroke-width="1.1"/></svg><svg style="position:absolute;left:4.5px;top:227.2px" width="24.5" height="24.5" viewBox="0 0 24.5 24.5"><path d="M2.5 7.4 L21.5 7.4 M2.5 12.4 L21.5 12.4 M2.5 17.5 L21.5 17.5" stroke="#dadada" stroke-width="1.2"/></svg><svg style="position:absolute;left:4.5px;top:260.2px" width="24.5" height="24.5" viewBox="0 0 24.5 24.5"><path d="M3.9 5.6 L9.5 5.6 L9.5 14.2 L20.5 14.2 L20.5 20.2 L3.9 20.2z" fill="#d6dadf"/><path d="M5.5 19 L9.8 14.6" stroke="#3a3f45" stroke-width="0.8"/><path d="M6.5 8 L9.5 8 M6.5 10.3 L9.5 10.3 M6.5 12.6 L9.5 12.6 M12 14.2 L12 16.6 M14.4 14.2 L14.4 16.6 M16.8 14.2 L16.8 16.6" stroke="#1f2329" stroke-width="0.8"/></svg><svg style="position:absolute;left:6px;top:295.5px" width="20" height="20" viewBox="0 0 20 20"><rect x="2" y="4" width="16" height="14" rx="1.5" fill="#d8d8d8"/><path d="M6 2 L6 6 M14 2 L14 6" stroke="#d8d8d8" stroke-width="2"/><path d="M2 8 L18 8 M6.5 8 L6.5 18 M10 8 L10 18 M13.5 8 L13.5 18 M2 11.5 L18 11.5 M2 14.8 L18 14.8" stroke="#1f2329" stroke-width="0.9"/></svg><svg style="position:absolute;left:6px;top:328.5px" width="20" height="20" viewBox="0 0 20 20"><path d="M2 3 L18 3 L11.5 10.5 L11.5 17 L8.5 17 L8.5 10.5z" fill="#dcdcdc"/></svg><svg style="position:absolute;left:6px;top:361.6px" width="20" height="20" viewBox="0 0 20 20"><path d="M1.5 10 Q10 2 18.5 10 Q10 18 1.5 10z" fill="#e0e0e0"/><circle cx="10" cy="10" r="3" fill="#1f2329"/><circle cx="10" cy="10" r="1.5" fill="#e0e0e0"/></svg><svg style="position:absolute;left:6px;top:394.6px" width="20" height="20" viewBox="0 0 20 20"><rect x="4" y="10" width="12" height="8" fill="#e0e0e0"/><path d="M6.5 10 L6.5 6.5 C6.5 2 13.5 2 13.5 6.5 L13.5 7" stroke="#e0e0e0" stroke-width="2.2" fill="none"/></svg><svg style="position:absolute;left:6px;top:427.7px" width="20" height="20" viewBox="0 0 20 20"><path d="M4 5 L16 5 M8 5 L8 3 L12 3 L12 5" stroke="#c2161c" stroke-width="1.6" fill="none"/><path d="M5.5 7 L14.5 7 L13.5 18 L6.5 18z" stroke="#c2161c" stroke-width="1.6" fill="none"/><path d="M8.5 9 L8.5 16 M11.5 9 L11.5 16" stroke="#c2161c" stroke-width="1.3"/></svg><svg style="position:absolute;left:8.5px;top:463.0px" width="15" height="15" viewBox="2.6 2.6 18.8 18.8"><path fill="#e8e8e8" d="M12 8.5a3.5 3.5 0 1 0 0 7a3.5 3.5 0 0 0 0-7zm9.4 5.1l-2.1.4a7.6 7.6 0 0 1-.8 1.9l1.2 1.8-1.8 1.8-1.8-1.2a7.6 7.6 0 0 1-1.9.8l-.4 2.1h-2.6l-.4-2.1a7.6 7.6 0 0 1-1.9-.8l-1.8 1.2-1.8-1.8 1.2-1.8a7.6 7.6 0 0 1-.8-1.9l-2.1-.4v-2.6l2.1-.4a7.6 7.6 0 0 1 .8-1.9L4.4 6.6l1.8-1.8 1.8 1.2a7.6 7.6 0 0 1 1.9-.8l.4-2.1h2.6l.4 2.1a7.6 7.6 0 0 1 1.9.8l1.8-1.2 1.8 1.8-1.2 1.8a7.6 7.6 0 0 1 .8 1.9l2.1.4z"/></svg>
<svg style="position:absolute;left:34px;top:723px" width="13" height="13" viewBox="2.6 2.6 18.8 18.8"><path fill="#e8e8e8" d="M12 8.5a3.5 3.5 0 1 0 0 7a3.5 3.5 0 0 0 0-7zm9.4 5.1l-2.1.4a7.6 7.6 0 0 1-.8 1.9l1.2 1.8-1.8 1.8-1.8-1.2a7.6 7.6 0 0 1-1.9.8l-.4 2.1h-2.6l-.4-2.1a7.6 7.6 0 0 1-1.9-.8l-1.8 1.2-1.8-1.8 1.2-1.8a7.6 7.6 0 0 1-.8-1.9l-2.1-.4v-2.6l2.1-.4a7.6 7.6 0 0 1 .8-1.9L4.4 6.6l1.8-1.8 1.8 1.2a7.6 7.6 0 0 1 1.9-.8l.4-2.1h2.6l.4 2.1a7.6 7.6 0 0 1 1.9.8l1.8-1.2 1.8 1.8-1.2 1.8a7.6 7.6 0 0 1 .8 1.9l2.1.4z"/></svg><div class="t" style="left:49.5px;top:723px;font-size:11px;color:#e8e8e8;">del.: 29</div><div class="q" style="left:121px;top:723px;width:10px;height:10px;font-size:8px;line-height:10px;">?</div><div class="t" style="left:49px;top:738px;font-size:11px;color:#e8e8e8;">sum:329</div><div class="t" style="left:49px;top:752px;font-size:11px;color:#ee7070;">sell:&nbsp; 150</div><svg style="position:absolute;left:34px;top:774px" width="13" height="13" viewBox="2.6 2.6 18.8 18.8"><path fill="#e8e8e8" d="M12 8.5a3.5 3.5 0 1 0 0 7a3.5 3.5 0 0 0 0-7zm9.4 5.1l-2.1.4a7.6 7.6 0 0 1-.8 1.9l1.2 1.8-1.8 1.8-1.8-1.2a7.6 7.6 0 0 1-1.9.8l-.4 2.1h-2.6l-.4-2.1a7.6 7.6 0 0 1-1.9-.8l-1.8 1.2-1.8-1.8 1.2-1.8a7.6 7.6 0 0 1-.8-1.9l-2.1-.4v-2.6l2.1-.4a7.6 7.6 0 0 1 .8-1.9L4.4 6.6l1.8-1.8 1.8 1.2a7.6 7.6 0 0 1 1.9-.8l.4-2.1h2.6l.4 2.1a7.6 7.6 0 0 1 1.9.8l1.8-1.2 1.8 1.8-1.2 1.8a7.6 7.6 0 0 1 .8 1.9l2.1.4z"/></svg><div class="t" style="left:49px;top:773.3px;font-size:11.1px;color:#e8e8e8;">A/B.spot.total</div><div class="q" style="left:119.5px;top:774px;width:10px;height:10px;font-size:8px;line-height:10px;">?</div><svg style="position:absolute;left:34px;top:789px" width="13" height="11" viewBox="0 0 13 11"><path d="M0.5 5.5 Q6.5 0 12.5 5.5 Q6.5 11 0.5 5.5z" fill="none" stroke="#d8d8d8" stroke-width="1.3"/><path d="M1 10.5 L12 0.5" stroke="#d8d8d8" stroke-width="1.2"/></svg><div class="t" style="left:49.5px;top:788.2px;font-size:10.5px;color:#f08a2c;">1%:&nbsp; 1.129</div><svg style="position:absolute;left:34px;top:801.5px" width="13" height="11" viewBox="0 0 13 11"><path d="M0.5 5.5 Q6.5 0 12.5 5.5 Q6.5 11 0.5 5.5z" fill="#d8d8d8"/><circle cx="6.5" cy="5.5" r="2.2" fill="#1f2329"/><circle cx="6.5" cy="5.5" r="1" fill="#d8d8d8"/></svg><div class="t" style="left:49.5px;top:800.2px;font-size:10.5px;color:#dc585c;">3%:&nbsp; 1.097</div><svg style="position:absolute;left:34px;top:813.5px" width="13" height="11" viewBox="0 0 13 11"><path d="M0.5 5.5 Q6.5 0 12.5 5.5 Q6.5 11 0.5 5.5z" fill="#d8d8d8"/><circle cx="6.5" cy="5.5" r="2.2" fill="#1f2329"/><circle cx="6.5" cy="5.5" r="1" fill="#d8d8d8"/></svg><div class="t" style="left:49.5px;top:812.2px;font-size:10.5px;color:#2eb34a;">5%:&nbsp; 1.063</div><div style="position:absolute;left:0;top:825px;width:133px;height:2.5px;overflow:hidden"><div class="t" style="left:49.5px;top:0px;font-size:10.5px;color:#2f7fd6">9%:&nbsp; 1.040</div></div>
<div class="sel" style="left:458.5px;top:854.5px;width:81px;height:26px;"><span style="position:absolute;left:13px;top:0;line-height:26px;font-size:12px">UTC+4</span><svg style="position:absolute;right:3.5px;top:10.0px" width="9" height="7" viewBox="0 0 9 7"><path d="M1 1.5 L4.5 5 L8 1.5" stroke="#e8e8e8" stroke-width="1.8" fill="none"/></svg></div><svg style="position:absolute;left:551px;top:858px" width="19" height="21" viewBox="0 0 19 21"><path d="M1 10.5 L18 10.5" stroke="#e0e0e0" stroke-width="1.5"/><path d="M9.5 1 L9.5 8 M6.5 5 L9.5 8 L12.5 5 M9.5 20 L9.5 13 M6.5 16 L9.5 13 L12.5 16" stroke="#e0e0e0" stroke-width="1.5" fill="none"/></svg><div class="sel" style="left:577px;top:855px;width:62px;height:24px;"><span style="position:absolute;left:5px;top:0;line-height:24px;font-size:10px">0.74:0.62</span><svg style="position:absolute;right:3.5px;top:9.0px" width="9" height="7" viewBox="0 0 9 7"><path d="M1 1.5 L4.5 5 L8 1.5" stroke="#e8e8e8" stroke-width="1.8" fill="none"/></svg></div><div style="position:absolute;left:643.5px;top:863px;width:11px;height:11px;border-radius:50%;background:#dc3545"></div><div style="position:absolute;left:646px;top:867.8px;width:6px;height:1.6px;background:#fff"></div><div style="position:absolute;left:656px;top:863px;width:11px;height:11px;border-radius:50%;background:#28a745"></div><div class="t" style="left:656px;top:861px;width:11px;text-align:center;font-size:11px;font-weight:bold;color:#1f2329;line-height:14px">+</div><div class="q" style="left:669px;top:860px;width:8.5px;height:8.5px;font-size:6.5px;line-height:8.5px;background:#8e9093;">?</div><div class="cb" style="left:681px;top:862.5px;width:13px;height:13px"><svg width="13" height="13" viewBox="0 0 13 13"><path d="M3 6.8 L5.4 9 L10 4.2" stroke="#fff" stroke-width="2.2" fill="none" stroke-linecap="round" stroke-linejoin="round"/></svg></div><div class="t" style="left:703.5px;top:861px;font-size:10.1px;color:#e4e6e8;">Save zoom</div><div class="q" style="left:758px;top:860px;width:8.5px;height:8.5px;font-size:6.5px;line-height:8.5px;background:#8e9093;">?</div><div style="position:absolute;left:776.5px;top:862px;width:1.5px;height:12px;background:#d8d8d8"></div><div class="t" style="left:790.5px;top:861.5px;font-size:11.3px;color:#e4e6e8;">Price step:</div><div class="inp" style="left:847px;top:854px;width:99.5px;height:29px;border-color:#e0e0e0"><span style="position:absolute;left:12px;top:0;line-height:28px;font-size:11px">50</span></div><div class="inp" style="left:951px;top:857px;width:42px;height:26px;border-color:#2a9a3c;border-radius:4px"><span style="position:absolute;left:11px;top:0;line-height:25px;font-size:8px;color:#2fb34a">Auto</span></div><div class="q" style="left:996px;top:860px;width:8.5px;height:8.5px;font-size:6.5px;line-height:8.5px;background:#8e9093;">?</div><div class="cbw" style="left:1008px;top:863px;width:14.5px;height:14.5px"></div><div class="t" style="left:1030px;top:861px;font-size:10.5px;color:#e4e6e8;">Follow price</div><div class="q" style="left:1089px;top:860px;width:8.5px;height:8.5px;font-size:6.5px;line-height:8.5px;background:#8e9093;">?</div><div style="position:absolute;left:1518px;top:845px;width:35px;height:35px;border-radius:50%;background:#37a4dd"></div><svg style="position:absolute;left:1524px;top:853px" width="22" height="22" viewBox="0 0 22 22"><path d="M0.5 10.2 L19.6 2.4 L16.6 18.6 L9.2 13.4 L14.5 7.2 L7.6 11.6 L3.4 12.2 Z" fill="#ffffff"/></svg>
</body></html>
